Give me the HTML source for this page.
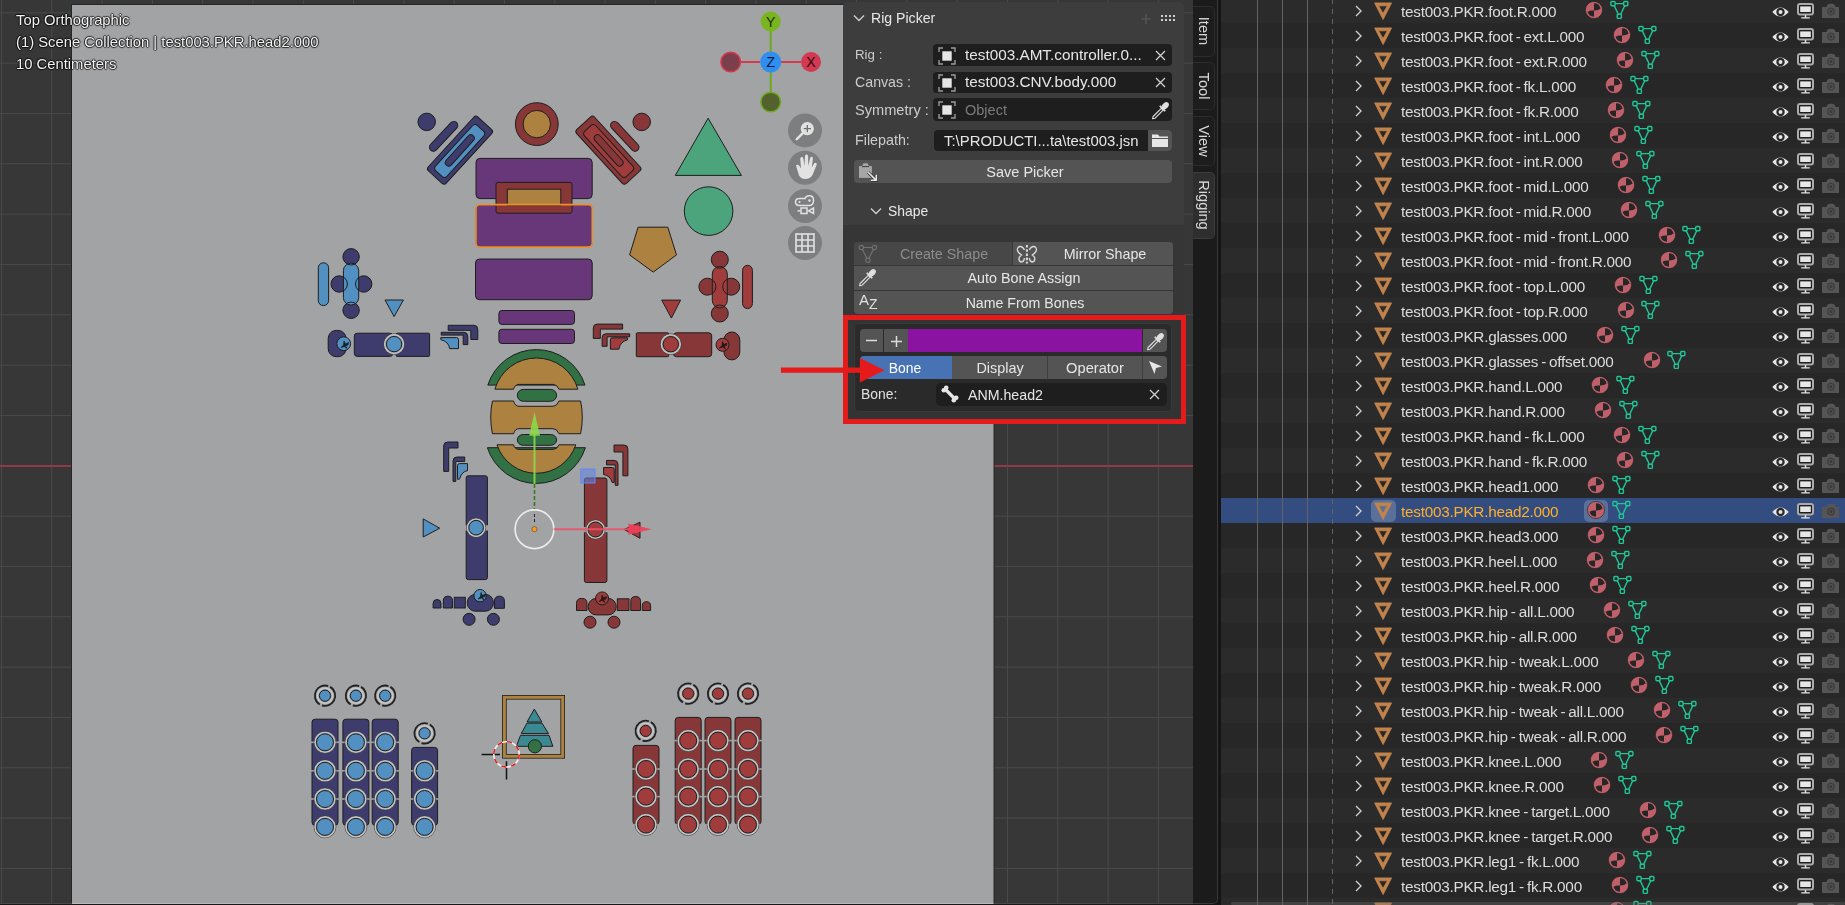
<!DOCTYPE html><html><head><meta charset="utf-8"><style>
*{box-sizing:border-box}
html,body{margin:0;padding:0}
.t,.ovl,.nm{-webkit-font-smoothing:antialiased;will-change:transform}
body{width:1845px;height:905px;overflow:hidden;position:relative;background:#282828;font-family:"Liberation Sans", sans-serif;}
.a{position:absolute}
.ovl{color:#f4f4f4;font-size:14.8px;line-height:20px;text-shadow:1px 0 1px rgba(0,0,0,0.75),-1px 0 1px rgba(0,0,0,0.75),0 1px 1px rgba(0,0,0,0.75),0 -1px 1px rgba(0,0,0,0.75);white-space:nowrap}
.t{position:absolute;white-space:nowrap;line-height:20px;height:20px}
.row{position:absolute;left:1221px;width:624px;height:25px}
.nm{position:absolute;left:180px;top:4px;line-height:20px;color:#dcdcdc;font-size:15.3px;letter-spacing:-0.25px;white-space:nowrap;display:flex;align-items:center}
.h{padding:0 3.0px}
svg{overflow:visible}
</style></head><body>
<svg width="1193" height="905" viewBox="0 0 1193 905" style="position:absolute;left:0;top:0">
<rect width="1193" height="905" fill="#373737"/>
<path d="M1.5 0V905 M51.8 0V905 M102.1 0V905 M152.4 0V905 M202.7 0V905 M253 0V905 M303.3 0V905 M353.6 0V905 M403.9 0V905 M454.2 0V905 M504.5 0V905 M554.8 0V905 M605.1 0V905 M655.4 0V905 M705.7 0V905 M756 0V905 M806.3 0V905 M856.6 0V905 M906.9 0V905 M957.2 0V905 M1007.5 0V905 M1057.8 0V905 M1108.1 0V905 M1158.4 0V905 M0 12.8H1193 M0 63.13H1193 M0 113.46H1193 M0 163.79H1193 M0 214.12H1193 M0 264.45H1193 M0 314.78H1193 M0 365.11H1193 M0 415.44H1193 M0 465.77H1193 M0 516.1H1193 M0 566.43H1193 M0 616.76H1193 M0 667.09H1193 M0 717.42H1193 M0 767.75H1193 M0 818.08H1193 M0 868.41H1193" stroke="#4a4a4a" stroke-width="1" fill="none"/>
<rect x="0" y="465" width="1193" height="2" fill="#8f3a4c"/>
<rect x="71" y="4" width="923.5" height="902" fill="#262626"/>
<rect x="72" y="5" width="921.5" height="900" fill="#a2a3a5"/>
<rect x="0" y="903" width="1193" height="1" fill="#4a4a4a"/><rect x="72" y="903" width="921.5" height="1" fill="#b8b9bb"/><rect x="0" y="904" width="1193" height="1" fill="#181818"/>
<circle cx="426.7" cy="121.9" r="8.75" fill="#3d3c6c" stroke="#1e1e1e" stroke-width="1" /><rect x="424.67" y="132.3" width="37.86" height="8" rx="4" fill="#3d3c6c" stroke="#1e1e1e" stroke-width="1" transform="rotate(-46.9 443.6 136.3)"/><rect x="423.4" y="138.05" width="73.2" height="24.3" rx="3" fill="#3d3c6c" stroke="#1e1e1e" stroke-width="1" transform="rotate(-47.5 460 150.2)"/><rect x="428.95" y="143.4" width="61.5" height="15.2" rx="3.5" fill="#5290c2" stroke="#1e1e1e" stroke-width="1" transform="rotate(-47.5 459.7 151)"/><rect x="439.89" y="146.95" width="39.71" height="7" rx="3.5" fill="#3d3c6c" stroke="#1e1e1e" stroke-width="1" transform="rotate(-47.97 459.75 150.45)"/>
<g transform="translate(1068.4,0) scale(-1,1)"><circle cx="426.7" cy="121.9" r="8.75" fill="#873737" stroke="#1e1e1e" stroke-width="1" /><rect x="424.67" y="132.3" width="37.86" height="8" rx="4" fill="#873737" stroke="#1e1e1e" stroke-width="1" transform="rotate(-46.9 443.6 136.3)"/><rect x="423.4" y="138.05" width="73.2" height="24.3" rx="3" fill="#873737" stroke="#1e1e1e" stroke-width="1" transform="rotate(-47.5 460 150.2)"/><rect x="428.95" y="143.4" width="61.5" height="15.2" rx="3.5" fill="#a03c3c" stroke="#1e1e1e" stroke-width="1" transform="rotate(-47.5 459.7 151)"/><rect x="439.89" y="146.95" width="39.71" height="7" rx="3.5" fill="#873737" stroke="#1e1e1e" stroke-width="1" transform="rotate(-47.97 459.75 150.45)"/></g>
<circle cx="536.8" cy="124.1" r="21.4" fill="#873737" stroke="#1e1e1e" stroke-width="1" />
<circle cx="536.8" cy="124.1" r="13.7" fill="#ad8140" stroke="#1e1e1e" stroke-width="1" />
<rect x="476" y="158.4" width="116.2" height="40.2" rx="4" fill="#67377a" stroke="#1e1e1e" stroke-width="1" />
<rect x="476" y="204.6" width="116.2" height="42.5" rx="4" fill="#67377a" stroke="#1e1e1e" stroke-width="1" />
<rect x="496" y="182.4" width="76" height="30.8" rx="2" fill="#873737" stroke="#1e1e1e" stroke-width="1" />
<rect x="507.3" y="189.2" width="53.5" height="16.3" rx="0" fill="#ad8140" stroke="#1e1e1e" stroke-width="1" />
<rect x="476" y="204.6" width="116.2" height="42.5" rx="4" fill="none" stroke="#f0902a" stroke-width="1.6"/>
<rect x="475.5" y="259" width="116.7" height="40.7" rx="4" fill="#67377a" stroke="#1e1e1e" stroke-width="1" />
<rect x="498.9" y="310.5" width="75.6" height="13.9" rx="3" fill="#67377a" stroke="#1e1e1e" stroke-width="1" />
<rect x="498.9" y="329.3" width="75.6" height="14.2" rx="3" fill="#67377a" stroke="#1e1e1e" stroke-width="1" />
<polygon points="708.1,118.2 675.3,175.4 741.4,175.4" fill="#4ba47b" stroke="#1e1e1e" stroke-width="1" />
<circle cx="708.6" cy="211.1" r="24.3" fill="#4ba47b" stroke="#1e1e1e" stroke-width="1" />
<polygon points="638.1,227.2 667.8,227.2 676.5,254.9 653.2,272.1 629.6,254.9" fill="#ad8140" stroke="#1e1e1e" stroke-width="1" />
<rect x="318.3" y="262.8" width="10.3" height="42.8" rx="5" fill="#5290c2" stroke="#1e1e1e" stroke-width="1" /><circle cx="351.1" cy="256.8" r="8.2" fill="#3d3c6c"/><circle cx="339.2" cy="284" r="8.2" fill="#3d3c6c"/><circle cx="363.7" cy="284" r="8.2" fill="#3d3c6c"/><circle cx="351.1" cy="310.3" r="8.2" fill="#3d3c6c"/><rect x="343.4" y="263.2" width="15.3" height="41.8" rx="7.5" fill="#5290c2" stroke="#1e1e1e" stroke-width="1" /><circle cx="351.1" cy="256.8" r="8.2" fill="none" stroke="#1e1e1e" stroke-width="1"/><circle cx="339.2" cy="284" r="8.2" fill="none" stroke="#1e1e1e" stroke-width="1"/><circle cx="363.7" cy="284" r="8.2" fill="none" stroke="#1e1e1e" stroke-width="1"/><circle cx="351.1" cy="310.3" r="8.2" fill="none" stroke="#1e1e1e" stroke-width="1"/>
<rect x="742.6" y="265.3" width="9.8" height="43.3" rx="5" fill="#a03c3c" stroke="#1e1e1e" stroke-width="1" /><circle cx="719.8" cy="259.7" r="8.5" fill="#873737"/><circle cx="707.4" cy="286.7" r="8.5" fill="#873737"/><circle cx="731.2" cy="286.7" r="8.5" fill="#873737"/><circle cx="719.8" cy="313.5" r="8.5" fill="#873737"/><rect x="712.3" y="266.5" width="15" height="41.4" rx="7.5" fill="#a03c3c" stroke="#1e1e1e" stroke-width="1" /><circle cx="719.8" cy="259.7" r="8.5" fill="none" stroke="#1e1e1e" stroke-width="1"/><circle cx="707.4" cy="286.7" r="8.5" fill="none" stroke="#1e1e1e" stroke-width="1"/><circle cx="731.2" cy="286.7" r="8.5" fill="none" stroke="#1e1e1e" stroke-width="1"/><circle cx="719.8" cy="313.5" r="8.5" fill="none" stroke="#1e1e1e" stroke-width="1"/>
<polygon points="385,300 403.4,300 394.1,316.6" fill="#5290c2" stroke="#1e1e1e" stroke-width="1" />
<polygon points="661.7,300.1 680.6,300.1 671.4,318.1" fill="#a03c3c" stroke="#1e1e1e" stroke-width="1" />
<rect x="328.2" y="330.4" width="17.8" height="26.3" rx="8" fill="#3d3c6c" stroke="#1e1e1e" stroke-width="1" />
<circle cx="343.7" cy="343.7" r="6.9" fill="#5290c2" stroke="#1e1e1e" stroke-width="1" />
<g transform="translate(344.5,344.5)" fill="#151515" stroke="#151515" stroke-width="0.6"><path d="M-0.5 -3.5 L1 -0.5 L4 -2 L3.5 0.5 L1 1 L2.5 4 L0 2 L-3.5 3 L-1 0.5 Z" fill-opacity="0.9"/></g>
<rect x="354.3" y="333.2" width="38.5" height="23.2" rx="3" fill="#3d3c6c" stroke="#1e1e1e" stroke-width="1" />
<rect x="396.2" y="333.2" width="33.4" height="23.2" rx="1" fill="#3d3c6c" stroke="#1e1e1e" stroke-width="1" />
<circle cx="394.1" cy="344.1" r="10.4" fill="#a2a3a5" stroke="#3a3a3a" stroke-width="0.7"/><circle cx="394.1" cy="344.1" r="9.5" fill="none" stroke="#c8c8c8" stroke-width="1.1"/><circle cx="394.1" cy="344.1" r="7.7" fill="#5290c2" stroke="#1e1e1e" stroke-width="1" />
<rect x="636.3" y="332.8" width="32.4" height="23.9" rx="1" fill="#873737" stroke="#1e1e1e" stroke-width="1" />
<rect x="673.5" y="332.8" width="38.2" height="23.9" rx="3" fill="#873737" stroke="#1e1e1e" stroke-width="1" />
<circle cx="670.8" cy="344.2" r="10.4" fill="#a2a3a5" stroke="#3a3a3a" stroke-width="0.7"/><circle cx="670.8" cy="344.2" r="9.5" fill="none" stroke="#c8c8c8" stroke-width="1.1"/><circle cx="670.8" cy="344.2" r="7.7" fill="#a03c3c" stroke="#1e1e1e" stroke-width="1" />
<rect x="723.9" y="332" width="15.9" height="27.9" rx="8" fill="#873737" stroke="#1e1e1e" stroke-width="1" />
<circle cx="722.5" cy="344.8" r="6.5" fill="#a03c3c" stroke="#1e1e1e" stroke-width="1" />
<g transform="translate(723,345)" fill="#151515" stroke="#151515" stroke-width="0.6"><path d="M-0.5 -3.5 L1 -0.5 L4 -2 L3.5 0.5 L1 1 L2.5 4 L0 2 L-3.5 3 L-1 0.5 Z" fill-opacity="0.9"/></g>
<path d="M448.2 325.3 H473.8 Q477.8 325.3 477.8 329.3 V339.5 H470.8 V330.3 H448.2 Z" fill="#3d3c6c" stroke="#1e1e1e" stroke-width="1"/>
<path d="M441.2 332.3 H463.8 Q467.8 332.3 467.8 336.3 V344.6 H463.2 V335.1 H441.2 Z" fill="#3d3c6c" stroke="#1e1e1e" stroke-width="1"/>
<path d="M440.8 337.6 H456.5 Q458.5 337.6 458.5 339.6 V348.6 H449.65 Q448.65 341.6 440.8 339.6 Z" fill="#5290c2" stroke="#1e1e1e" stroke-width="1"/>
<path d="M622.6 324.1 H597.3 Q593.3 324.1 593.3 328.1 V338.4 H600.3 V329.1 H622.6 Z" fill="#873737" stroke="#1e1e1e" stroke-width="1"/>
<path d="M629.7 333.8 H606.1 Q602.1 333.8 602.1 337.8 V346.3 H607.1 V336.8 H629.7 Z" fill="#873737" stroke="#1e1e1e" stroke-width="1"/>
<path d="M627.5 337.8 H612.4 Q610.4 337.8 610.4 339.8 V349.2 H618.95 Q619.95 341.8 627.5 339.8 Z" fill="#a03c3c" stroke="#1e1e1e" stroke-width="1"/>
<path d="M443.7 471.4 V446 Q443.7 442 447.7 442 H458 V448 H448.7 V471.4 Z" fill="#3d3c6c" stroke="#1e1e1e" stroke-width="1"/>
<path d="M453 481.4 V461 Q453 457 457 457 H464.7 V461.5 H455.8 V481.4 Z" fill="#3d3c6c" stroke="#1e1e1e" stroke-width="1"/>
<path d="M457.5 479.2 V465.6 Q457.5 463.6 459.5 463.6 H467.5 V470.6 Q461.5 471.6 459.5 479.2 Z" fill="#5290c2" stroke="#1e1e1e" stroke-width="1"/>
<path d="M627.9 475.8 V449 Q627.9 445 623.9 445 H614 V452 H622.9 V475.8 Z" fill="#873737" stroke="#1e1e1e" stroke-width="1"/>
<path d="M618 485.3 V464.4 Q618 460.4 614 460.4 H606.5 V464.9 H615.2 V485.3 Z" fill="#873737" stroke="#1e1e1e" stroke-width="1"/>
<path d="M614.2 482.5 V469.5 Q614.2 467.5 612.2 467.5 H603.6 V474.5 Q610.2 475.5 612.2 482.5 Z" fill="#a03c3c" stroke="#1e1e1e" stroke-width="1"/>
<rect x="466.2" y="475.8" width="21.2" height="103.8" rx="2" fill="#3d3c6c" stroke="#1e1e1e" stroke-width="1" />
<rect x="465" y="525.3" width="23.6" height="5.2" fill="#a2a3a5"/>
<circle cx="476.1" cy="527.7" r="9.6" fill="#a2a3a5" stroke="#3a3a3a" stroke-width="0.7"/><circle cx="476.1" cy="527.7" r="8.7" fill="none" stroke="#c8c8c8" stroke-width="1.1"/><circle cx="476.1" cy="527.7" r="7.3" fill="#5290c2" stroke="#1e1e1e" stroke-width="1" />
<rect x="584.4" y="478" width="22.5" height="104.5" rx="2" fill="#873737" stroke="#1e1e1e" stroke-width="1" />
<rect x="583.2" y="527" width="25" height="5.2" fill="#a2a3a5"/>
<circle cx="595.5" cy="529.5" r="9.6" fill="#a2a3a5" stroke="#3a3a3a" stroke-width="0.7"/><circle cx="595.5" cy="529.5" r="8.7" fill="none" stroke="#c8c8c8" stroke-width="1.1"/><circle cx="595.5" cy="529.5" r="7.5" fill="#a03c3c" stroke="#1e1e1e" stroke-width="1" />
<polygon points="423.2,518.9 423.2,537 439.7,528.2" fill="#5290c2" stroke="#1e1e1e" stroke-width="1" />
<polygon points="640,522.2 640,538.3 624.2,529.5" fill="#a03c3c" stroke="#1e1e1e" stroke-width="1" />
<path d="M433.1 608 V603.45 Q433.1 599.5 437.05 599.5 H437.05 Q441 599.5 441 603.45 V608 Z" fill="#3d3c6c" stroke="#1e1e1e" stroke-width="1"/>
<path d="M443.3 608 V600.8 Q443.3 596.2 447.9 596.2 H447.9 Q452.5 596.2 452.5 600.8 V608 Z" fill="#3d3c6c" stroke="#1e1e1e" stroke-width="1"/>
<path d="M494.5 608.3 V601.15 Q494.5 596.2 499.45 596.2 H499.45 Q504.4 596.2 504.4 601.15 V608.3 Z" fill="#3d3c6c" stroke="#1e1e1e" stroke-width="1"/>
<rect x="454.3" y="597.3" width="11" height="10.7" rx="0" fill="#3d3c6c" stroke="#1e1e1e" stroke-width="1" />
<rect x="467.3" y="594.4" width="26.1" height="16.8" rx="8" fill="#3d3c6c" stroke="#1e1e1e" stroke-width="1" />
<circle cx="480.1" cy="595.7" r="6.2" fill="#5290c2" stroke="#1e1e1e" stroke-width="1" />
<g transform="translate(481.5,596)" fill="#151515" stroke="#151515" stroke-width="0.6"><path d="M-0.5 -3.5 L1 -0.5 L4 -2 L3.5 0.5 L1 1 L2.5 4 L0 2 L-3.5 3 L-1 0.5 Z" fill-opacity="0.9"/></g>
<circle cx="469.1" cy="619.3" r="6" fill="#3d3c6c" stroke="#1e1e1e" stroke-width="1" />
<circle cx="493.4" cy="619.3" r="6" fill="#3d3c6c" stroke="#1e1e1e" stroke-width="1" />
<path d="M576.5 610.5 V603.4 Q576.5 598.4 581.5 598.4 H582 Q587 598.4 587 603.4 V610.5 Z" fill="#873737" stroke="#1e1e1e" stroke-width="1"/>
<path d="M630.8 610.5 V601.35 Q630.8 596.5 635.65 596.5 H635.65 Q640.5 596.5 640.5 601.35 V610.5 Z" fill="#873737" stroke="#1e1e1e" stroke-width="1"/>
<path d="M642.3 610.5 V605.85 Q642.3 601.7 646.45 601.7 H646.45 Q650.6 601.7 650.6 605.85 V610.5 Z" fill="#873737" stroke="#1e1e1e" stroke-width="1"/>
<rect x="617.3" y="598.8" width="11.7" height="11.7" rx="0" fill="#873737" stroke="#1e1e1e" stroke-width="1" />
<rect x="588.2" y="598.4" width="28" height="16.5" rx="8" fill="#873737" stroke="#1e1e1e" stroke-width="1" />
<circle cx="602.1" cy="598.4" r="6.5" fill="#a03c3c" stroke="#1e1e1e" stroke-width="1" />
<g transform="translate(602.5,598.5)" fill="#151515" stroke="#151515" stroke-width="0.6"><path d="M-0.5 -3.5 L1 -0.5 L4 -2 L3.5 0.5 L1 1 L2.5 4 L0 2 L-3.5 3 L-1 0.5 Z" fill-opacity="0.9"/></g>
<circle cx="590" cy="622.2" r="6" fill="#873737" stroke="#1e1e1e" stroke-width="1" />
<circle cx="614" cy="622.2" r="6" fill="#873737" stroke="#1e1e1e" stroke-width="1" />
<path d="M487.81 385.1 A51 51 0 0 1 584.99 385.1 Z" fill="#317143" stroke="#1e1e1e" stroke-width="1"/>
<path d="M494.9 389.2 A 43.2 43.2 0 0 1 577.9 389.2 H559 Q557 384.4 553 384.4 H519 Q515 384.4 513.5 389.2 Z" fill="#ad8140" stroke="#1e1e1e" stroke-width="1"/>
<rect x="517.3" y="389.4" width="39.3" height="11.9" rx="6" fill="#317143" stroke="#1e1e1e" stroke-width="1" />
<path d="M492.4 401 H513.5 Q515 406.3 519 406.3 H553 Q557 406.3 559 401 H580.6 Q584 417 580.6 433.7 H559 Q557 428.7 553 428.7 H519 Q515 428.7 513.5 433.7 H492.4 Q489 417 492.4 401 Z" fill="#ad8140" stroke="#1e1e1e" stroke-width="1"/>
<rect x="517.3" y="434.5" width="39.3" height="10.8" rx="6" fill="#317143" stroke="#1e1e1e" stroke-width="1" />
<path d="M487.38 447.7 A51.5 51.5 0 0 0 585.42 447.7 Z" fill="#317143" stroke="#1e1e1e" stroke-width="1"/>
<path d="M497 444.8 H513.5 Q515 449.4 519 449.4 H553 Q557 449.4 559 444.8 H575.8 A 41.5 41.5 0 0 1 497 444.8 Z" fill="#ad8140" stroke="#1e1e1e" stroke-width="1"/>
<rect x="312" y="719.2" width="26" height="106.1" rx="3" fill="#3d3c6c" stroke="#1e1e1e" stroke-width="1" /><rect x="311" y="741.5" width="28" height="1.6" fill="#a2a3a5"/><rect x="311" y="770" width="28" height="1.6" fill="#a2a3a5"/><rect x="311" y="798.2" width="28" height="1.6" fill="#a2a3a5"/><rect x="311" y="826.1" width="28" height="1.6" fill="#a2a3a5"/><circle cx="325" cy="742.3" r="10.9" fill="#a2a3a5" stroke="#3a3a3a" stroke-width="0.7"/><circle cx="325" cy="742.3" r="10" fill="none" stroke="#c8c8c8" stroke-width="1.1"/><circle cx="325" cy="742.3" r="8.5" fill="#5290c2" stroke="#1e1e1e" stroke-width="1" /><circle cx="325" cy="770.8" r="10.9" fill="#a2a3a5" stroke="#3a3a3a" stroke-width="0.7"/><circle cx="325" cy="770.8" r="10" fill="none" stroke="#c8c8c8" stroke-width="1.1"/><circle cx="325" cy="770.8" r="8.5" fill="#5290c2" stroke="#1e1e1e" stroke-width="1" /><circle cx="325" cy="799" r="10.9" fill="#a2a3a5" stroke="#3a3a3a" stroke-width="0.7"/><circle cx="325" cy="799" r="10" fill="none" stroke="#c8c8c8" stroke-width="1.1"/><circle cx="325" cy="799" r="8.5" fill="#5290c2" stroke="#1e1e1e" stroke-width="1" /><circle cx="325" cy="826.9" r="10.9" fill="#a2a3a5" stroke="#3a3a3a" stroke-width="0.7"/><circle cx="325" cy="826.9" r="10" fill="none" stroke="#c8c8c8" stroke-width="1.1"/><circle cx="325" cy="826.9" r="8.5" fill="#5290c2" stroke="#1e1e1e" stroke-width="1" />
<circle cx="325" cy="695.7" r="10.2" fill="none" stroke="#222" stroke-width="1.8" stroke-dasharray="29.6 2.4" transform="rotate(-60 325 695.7)"/><circle cx="325" cy="695.7" r="7.6" fill="none" stroke="#c8c8c8" stroke-width="1.6"/><circle cx="325" cy="695.7" r="5.6" fill="#5290c2" stroke="#1e1e1e" stroke-width="1" />
<rect x="342.9" y="719.2" width="26" height="106.1" rx="3" fill="#3d3c6c" stroke="#1e1e1e" stroke-width="1" /><rect x="341.9" y="741.5" width="28" height="1.6" fill="#a2a3a5"/><rect x="341.9" y="770" width="28" height="1.6" fill="#a2a3a5"/><rect x="341.9" y="798.2" width="28" height="1.6" fill="#a2a3a5"/><rect x="341.9" y="826.1" width="28" height="1.6" fill="#a2a3a5"/><circle cx="355.9" cy="742.3" r="10.9" fill="#a2a3a5" stroke="#3a3a3a" stroke-width="0.7"/><circle cx="355.9" cy="742.3" r="10" fill="none" stroke="#c8c8c8" stroke-width="1.1"/><circle cx="355.9" cy="742.3" r="8.5" fill="#5290c2" stroke="#1e1e1e" stroke-width="1" /><circle cx="355.9" cy="770.8" r="10.9" fill="#a2a3a5" stroke="#3a3a3a" stroke-width="0.7"/><circle cx="355.9" cy="770.8" r="10" fill="none" stroke="#c8c8c8" stroke-width="1.1"/><circle cx="355.9" cy="770.8" r="8.5" fill="#5290c2" stroke="#1e1e1e" stroke-width="1" /><circle cx="355.9" cy="799" r="10.9" fill="#a2a3a5" stroke="#3a3a3a" stroke-width="0.7"/><circle cx="355.9" cy="799" r="10" fill="none" stroke="#c8c8c8" stroke-width="1.1"/><circle cx="355.9" cy="799" r="8.5" fill="#5290c2" stroke="#1e1e1e" stroke-width="1" /><circle cx="355.9" cy="826.9" r="10.9" fill="#a2a3a5" stroke="#3a3a3a" stroke-width="0.7"/><circle cx="355.9" cy="826.9" r="10" fill="none" stroke="#c8c8c8" stroke-width="1.1"/><circle cx="355.9" cy="826.9" r="8.5" fill="#5290c2" stroke="#1e1e1e" stroke-width="1" />
<circle cx="355.9" cy="695.7" r="10.2" fill="none" stroke="#222" stroke-width="1.8" stroke-dasharray="29.6 2.4" transform="rotate(-60 355.9 695.7)"/><circle cx="355.9" cy="695.7" r="7.6" fill="none" stroke="#c8c8c8" stroke-width="1.6"/><circle cx="355.9" cy="695.7" r="5.6" fill="#5290c2" stroke="#1e1e1e" stroke-width="1" />
<rect x="372.2" y="719.2" width="26" height="106.1" rx="3" fill="#3d3c6c" stroke="#1e1e1e" stroke-width="1" /><rect x="371.2" y="741.5" width="28" height="1.6" fill="#a2a3a5"/><rect x="371.2" y="770" width="28" height="1.6" fill="#a2a3a5"/><rect x="371.2" y="798.2" width="28" height="1.6" fill="#a2a3a5"/><rect x="371.2" y="826.1" width="28" height="1.6" fill="#a2a3a5"/><circle cx="385.2" cy="742.3" r="10.9" fill="#a2a3a5" stroke="#3a3a3a" stroke-width="0.7"/><circle cx="385.2" cy="742.3" r="10" fill="none" stroke="#c8c8c8" stroke-width="1.1"/><circle cx="385.2" cy="742.3" r="8.5" fill="#5290c2" stroke="#1e1e1e" stroke-width="1" /><circle cx="385.2" cy="770.8" r="10.9" fill="#a2a3a5" stroke="#3a3a3a" stroke-width="0.7"/><circle cx="385.2" cy="770.8" r="10" fill="none" stroke="#c8c8c8" stroke-width="1.1"/><circle cx="385.2" cy="770.8" r="8.5" fill="#5290c2" stroke="#1e1e1e" stroke-width="1" /><circle cx="385.2" cy="799" r="10.9" fill="#a2a3a5" stroke="#3a3a3a" stroke-width="0.7"/><circle cx="385.2" cy="799" r="10" fill="none" stroke="#c8c8c8" stroke-width="1.1"/><circle cx="385.2" cy="799" r="8.5" fill="#5290c2" stroke="#1e1e1e" stroke-width="1" /><circle cx="385.2" cy="826.9" r="10.9" fill="#a2a3a5" stroke="#3a3a3a" stroke-width="0.7"/><circle cx="385.2" cy="826.9" r="10" fill="none" stroke="#c8c8c8" stroke-width="1.1"/><circle cx="385.2" cy="826.9" r="8.5" fill="#5290c2" stroke="#1e1e1e" stroke-width="1" />
<circle cx="385.2" cy="695.7" r="10.2" fill="none" stroke="#222" stroke-width="1.8" stroke-dasharray="29.6 2.4" transform="rotate(-60 385.2 695.7)"/><circle cx="385.2" cy="695.7" r="7.6" fill="none" stroke="#c8c8c8" stroke-width="1.6"/><circle cx="385.2" cy="695.7" r="5.6" fill="#5290c2" stroke="#1e1e1e" stroke-width="1" />
<rect x="411.6" y="747.4" width="26" height="77.9" rx="3" fill="#3d3c6c" stroke="#1e1e1e" stroke-width="1" /><rect x="410.6" y="770" width="28" height="1.6" fill="#a2a3a5"/><rect x="410.6" y="798.2" width="28" height="1.6" fill="#a2a3a5"/><rect x="410.6" y="826.1" width="28" height="1.6" fill="#a2a3a5"/><circle cx="424.6" cy="770.8" r="10.9" fill="#a2a3a5" stroke="#3a3a3a" stroke-width="0.7"/><circle cx="424.6" cy="770.8" r="10" fill="none" stroke="#c8c8c8" stroke-width="1.1"/><circle cx="424.6" cy="770.8" r="8.5" fill="#5290c2" stroke="#1e1e1e" stroke-width="1" /><circle cx="424.6" cy="799" r="10.9" fill="#a2a3a5" stroke="#3a3a3a" stroke-width="0.7"/><circle cx="424.6" cy="799" r="10" fill="none" stroke="#c8c8c8" stroke-width="1.1"/><circle cx="424.6" cy="799" r="8.5" fill="#5290c2" stroke="#1e1e1e" stroke-width="1" /><circle cx="424.6" cy="826.9" r="10.9" fill="#a2a3a5" stroke="#3a3a3a" stroke-width="0.7"/><circle cx="424.6" cy="826.9" r="10" fill="none" stroke="#c8c8c8" stroke-width="1.1"/><circle cx="424.6" cy="826.9" r="8.5" fill="#5290c2" stroke="#1e1e1e" stroke-width="1" />
<circle cx="424.6" cy="733.3" r="10.2" fill="none" stroke="#222" stroke-width="1.8" stroke-dasharray="29.6 2.4" transform="rotate(-60 424.6 733.3)"/><circle cx="424.6" cy="733.3" r="7.6" fill="none" stroke="#c8c8c8" stroke-width="1.6"/><circle cx="424.6" cy="733.3" r="5.6" fill="#5290c2" stroke="#1e1e1e" stroke-width="1" />
<rect x="675.2" y="717.4" width="26" height="107.2" rx="3" fill="#873737" stroke="#1e1e1e" stroke-width="1" /><rect x="674.2" y="739.8" width="28" height="1.6" fill="#a2a3a5"/><rect x="674.2" y="768.2" width="28" height="1.6" fill="#a2a3a5"/><rect x="674.2" y="795.8" width="28" height="1.6" fill="#a2a3a5"/><rect x="674.2" y="823.8" width="28" height="1.6" fill="#a2a3a5"/><circle cx="688.2" cy="740.6" r="10.9" fill="#a2a3a5" stroke="#3a3a3a" stroke-width="0.7"/><circle cx="688.2" cy="740.6" r="10" fill="none" stroke="#c8c8c8" stroke-width="1.1"/><circle cx="688.2" cy="740.6" r="8.5" fill="#a03c3c" stroke="#1e1e1e" stroke-width="1" /><circle cx="688.2" cy="769" r="10.9" fill="#a2a3a5" stroke="#3a3a3a" stroke-width="0.7"/><circle cx="688.2" cy="769" r="10" fill="none" stroke="#c8c8c8" stroke-width="1.1"/><circle cx="688.2" cy="769" r="8.5" fill="#a03c3c" stroke="#1e1e1e" stroke-width="1" /><circle cx="688.2" cy="796.6" r="10.9" fill="#a2a3a5" stroke="#3a3a3a" stroke-width="0.7"/><circle cx="688.2" cy="796.6" r="10" fill="none" stroke="#c8c8c8" stroke-width="1.1"/><circle cx="688.2" cy="796.6" r="8.5" fill="#a03c3c" stroke="#1e1e1e" stroke-width="1" /><circle cx="688.2" cy="824.6" r="10.9" fill="#a2a3a5" stroke="#3a3a3a" stroke-width="0.7"/><circle cx="688.2" cy="824.6" r="10" fill="none" stroke="#c8c8c8" stroke-width="1.1"/><circle cx="688.2" cy="824.6" r="8.5" fill="#a03c3c" stroke="#1e1e1e" stroke-width="1" />
<circle cx="688.2" cy="693.6" r="10.2" fill="none" stroke="#222" stroke-width="1.8" stroke-dasharray="29.6 2.4" transform="rotate(-60 688.2 693.6)"/><circle cx="688.2" cy="693.6" r="7.6" fill="none" stroke="#c8c8c8" stroke-width="1.6"/><circle cx="688.2" cy="693.6" r="5.6" fill="#a03c3c" stroke="#1e1e1e" stroke-width="1" />
<rect x="705" y="717.4" width="26" height="107.2" rx="3" fill="#873737" stroke="#1e1e1e" stroke-width="1" /><rect x="704" y="739.8" width="28" height="1.6" fill="#a2a3a5"/><rect x="704" y="768.2" width="28" height="1.6" fill="#a2a3a5"/><rect x="704" y="795.8" width="28" height="1.6" fill="#a2a3a5"/><rect x="704" y="823.8" width="28" height="1.6" fill="#a2a3a5"/><circle cx="718" cy="740.6" r="10.9" fill="#a2a3a5" stroke="#3a3a3a" stroke-width="0.7"/><circle cx="718" cy="740.6" r="10" fill="none" stroke="#c8c8c8" stroke-width="1.1"/><circle cx="718" cy="740.6" r="8.5" fill="#a03c3c" stroke="#1e1e1e" stroke-width="1" /><circle cx="718" cy="769" r="10.9" fill="#a2a3a5" stroke="#3a3a3a" stroke-width="0.7"/><circle cx="718" cy="769" r="10" fill="none" stroke="#c8c8c8" stroke-width="1.1"/><circle cx="718" cy="769" r="8.5" fill="#a03c3c" stroke="#1e1e1e" stroke-width="1" /><circle cx="718" cy="796.6" r="10.9" fill="#a2a3a5" stroke="#3a3a3a" stroke-width="0.7"/><circle cx="718" cy="796.6" r="10" fill="none" stroke="#c8c8c8" stroke-width="1.1"/><circle cx="718" cy="796.6" r="8.5" fill="#a03c3c" stroke="#1e1e1e" stroke-width="1" /><circle cx="718" cy="824.6" r="10.9" fill="#a2a3a5" stroke="#3a3a3a" stroke-width="0.7"/><circle cx="718" cy="824.6" r="10" fill="none" stroke="#c8c8c8" stroke-width="1.1"/><circle cx="718" cy="824.6" r="8.5" fill="#a03c3c" stroke="#1e1e1e" stroke-width="1" />
<circle cx="718" cy="693.6" r="10.2" fill="none" stroke="#222" stroke-width="1.8" stroke-dasharray="29.6 2.4" transform="rotate(-60 718 693.6)"/><circle cx="718" cy="693.6" r="7.6" fill="none" stroke="#c8c8c8" stroke-width="1.6"/><circle cx="718" cy="693.6" r="5.6" fill="#a03c3c" stroke="#1e1e1e" stroke-width="1" />
<rect x="735" y="717.4" width="26" height="107.2" rx="3" fill="#873737" stroke="#1e1e1e" stroke-width="1" /><rect x="734" y="739.8" width="28" height="1.6" fill="#a2a3a5"/><rect x="734" y="768.2" width="28" height="1.6" fill="#a2a3a5"/><rect x="734" y="795.8" width="28" height="1.6" fill="#a2a3a5"/><rect x="734" y="823.8" width="28" height="1.6" fill="#a2a3a5"/><circle cx="748" cy="740.6" r="10.9" fill="#a2a3a5" stroke="#3a3a3a" stroke-width="0.7"/><circle cx="748" cy="740.6" r="10" fill="none" stroke="#c8c8c8" stroke-width="1.1"/><circle cx="748" cy="740.6" r="8.5" fill="#a03c3c" stroke="#1e1e1e" stroke-width="1" /><circle cx="748" cy="769" r="10.9" fill="#a2a3a5" stroke="#3a3a3a" stroke-width="0.7"/><circle cx="748" cy="769" r="10" fill="none" stroke="#c8c8c8" stroke-width="1.1"/><circle cx="748" cy="769" r="8.5" fill="#a03c3c" stroke="#1e1e1e" stroke-width="1" /><circle cx="748" cy="796.6" r="10.9" fill="#a2a3a5" stroke="#3a3a3a" stroke-width="0.7"/><circle cx="748" cy="796.6" r="10" fill="none" stroke="#c8c8c8" stroke-width="1.1"/><circle cx="748" cy="796.6" r="8.5" fill="#a03c3c" stroke="#1e1e1e" stroke-width="1" /><circle cx="748" cy="824.6" r="10.9" fill="#a2a3a5" stroke="#3a3a3a" stroke-width="0.7"/><circle cx="748" cy="824.6" r="10" fill="none" stroke="#c8c8c8" stroke-width="1.1"/><circle cx="748" cy="824.6" r="8.5" fill="#a03c3c" stroke="#1e1e1e" stroke-width="1" />
<circle cx="748" cy="693.6" r="10.2" fill="none" stroke="#222" stroke-width="1.8" stroke-dasharray="29.6 2.4" transform="rotate(-60 748 693.6)"/><circle cx="748" cy="693.6" r="7.6" fill="none" stroke="#c8c8c8" stroke-width="1.6"/><circle cx="748" cy="693.6" r="5.6" fill="#a03c3c" stroke="#1e1e1e" stroke-width="1" />
<rect x="633" y="745.4" width="26" height="79.2" rx="3" fill="#873737" stroke="#1e1e1e" stroke-width="1" /><rect x="632" y="768.2" width="28" height="1.6" fill="#a2a3a5"/><rect x="632" y="795.8" width="28" height="1.6" fill="#a2a3a5"/><rect x="632" y="823.8" width="28" height="1.6" fill="#a2a3a5"/><circle cx="646" cy="769" r="10.9" fill="#a2a3a5" stroke="#3a3a3a" stroke-width="0.7"/><circle cx="646" cy="769" r="10" fill="none" stroke="#c8c8c8" stroke-width="1.1"/><circle cx="646" cy="769" r="8.5" fill="#a03c3c" stroke="#1e1e1e" stroke-width="1" /><circle cx="646" cy="796.6" r="10.9" fill="#a2a3a5" stroke="#3a3a3a" stroke-width="0.7"/><circle cx="646" cy="796.6" r="10" fill="none" stroke="#c8c8c8" stroke-width="1.1"/><circle cx="646" cy="796.6" r="8.5" fill="#a03c3c" stroke="#1e1e1e" stroke-width="1" /><circle cx="646" cy="824.6" r="10.9" fill="#a2a3a5" stroke="#3a3a3a" stroke-width="0.7"/><circle cx="646" cy="824.6" r="10" fill="none" stroke="#c8c8c8" stroke-width="1.1"/><circle cx="646" cy="824.6" r="8.5" fill="#a03c3c" stroke="#1e1e1e" stroke-width="1" />
<circle cx="645.7" cy="730.9" r="10.2" fill="none" stroke="#222" stroke-width="1.8" stroke-dasharray="29.6 2.4" transform="rotate(-60 645.7 730.9)"/><circle cx="645.7" cy="730.9" r="7.6" fill="none" stroke="#c8c8c8" stroke-width="1.6"/><circle cx="645.7" cy="730.9" r="5.6" fill="#a03c3c" stroke="#1e1e1e" stroke-width="1" />
<rect x="504.4" y="697.3" width="58.3" height="59" fill="none" stroke="#1e1e1e" stroke-width="4.6"/>
<rect x="504.4" y="697.3" width="58.3" height="59" fill="none" stroke="#ad8140" stroke-width="3"/>
<polygon points="534.3,709.1 527,722 541.9,722" fill="#3b8993" stroke="#1e1e1e" stroke-width="1" />
<polygon points="527,723.1 542,723.1 548.5,733.6 521.2,733.6" fill="#3b8993" stroke="#1e1e1e" stroke-width="1" />
<polygon points="520.5,735.3 549,735.3 552.9,746.3 516.4,746.3" fill="#3b8993" stroke="#1e1e1e" stroke-width="1" />
<circle cx="534.9" cy="746.3" r="6.6" fill="#317143" stroke="#1e1e1e" stroke-width="1" />
<path d="M481.6 754.4H500 M506.5 761.2V779.5" stroke="#111" stroke-width="1.5"/>
<circle cx="506.5" cy="754.4" r="12.7" fill="none" stroke="#f0f0f0" stroke-width="1.6"/>
<circle cx="506.5" cy="754.4" r="12.7" fill="none" stroke="#e02020" stroke-width="1.6" stroke-dasharray="5 5"/>
<rect x="580.8" y="469" width="14.2" height="14" fill="#5f86e6" fill-opacity="0.55" stroke="#5f86ff" stroke-width="1"/>
<path d="M534.5 484V430" stroke="#8cd84a" stroke-opacity="0.9" stroke-width="2"/>
<path d="M534.5 484V509" stroke="#3f7a1a" stroke-width="1.6" stroke-dasharray="4 2"/>
<polygon points="534.5,412 529.2,435.8 540,435.8" fill="#8cd84a" fill-opacity="0.9"/>
<path d="M534.5 514V523" stroke="#222" stroke-width="1" stroke-dasharray="3 2"/>
<circle cx="534.5" cy="529.2" r="19.4" fill="none" stroke="#ececec" stroke-width="1.7"/>
<circle cx="534.5" cy="529.2" r="2.6" fill="#ff9a1a" stroke="#333" stroke-width="0.5"/>
<path d="M553.7 529.2H630" stroke="#f0506a" stroke-opacity="0.85" stroke-width="2"/>
<polygon points="651.7,529.2 628.3,523.6 628.3,534.8" fill="#f0405a" fill-opacity="0.9"/>
<path d="M770.7 21.5V102 M730.7 62H811" stroke="none"/>
<path d="M770.7 31V52 M770.7 72V92" stroke="#6ea81e" stroke-width="2"/>
<path d="M740 62H760 M781 62H801" stroke="#d63a50" stroke-width="2"/>
<circle cx="770.7" cy="102" r="9.8" fill="#53612e" stroke="#6ea81e" stroke-width="1.5"/>
<circle cx="730.7" cy="62" r="9.8" fill="#7a3f4a" stroke="#d63a50" stroke-width="1.5"/>
<circle cx="770.7" cy="21.5" r="10" fill="#78b51e"/>
<circle cx="811" cy="62" r="10" fill="#d23a52"/>
<circle cx="770.7" cy="62" r="10.5" fill="#2f8ff0"/>
<text x="770.7" y="26.5" font-family="Liberation Sans" font-size="14" fill="#1b2a08" text-anchor="middle">Y</text>
<text x="770.7" y="67" font-family="Liberation Sans" font-size="14" fill="#0c1a33" text-anchor="middle">Z</text>
<text x="811" y="67" font-family="Liberation Sans" font-size="14" fill="#33080e" text-anchor="middle">X</text>
<circle cx="805" cy="130.4" r="17" fill="#7d7e80"/>
<circle cx="805" cy="167.8" r="17" fill="#7d7e80"/>
<circle cx="805" cy="206" r="17" fill="#7d7e80"/>
<circle cx="805" cy="243" r="17" fill="#7d7e80"/>
<circle cx="807.3" cy="128.6" r="6.6" fill="#e2e2e2"/><path d="M807.3 125V132.2 M803.7 128.6H810.9" stroke="#6e6e6e" stroke-width="1.3"/><path d="M802.8 133.2L796.8 139.2" stroke="#e2e2e2" stroke-width="2.6" stroke-linecap="round"/>
<path d="M796 165.5 Q797.5 163.8 799.5 166 L801 168.5 L800.2 158.5 Q800.6 156.8 802 157 Q803.2 157.3 803.4 158.8 L804.5 166 L805 156 Q805.4 154.5 806.8 154.6 Q808 154.8 808.1 156.3 L808.3 166 L810.2 157.8 Q810.7 156.5 812 156.8 Q813 157.2 812.9 158.6 L811.8 167.5 L814 163.5 Q815 162.3 816.2 162.9 Q817 163.6 816.6 165 L812.5 175 Q810 179.2 805 179 Q801 178.8 799 175.5 Z" fill="#e2e2e2"/>
<g stroke="#e2e2e2" fill="none" stroke-width="1.5"><path d="M799.5 205.5 Q795.5 205.5 795.5 202 Q795.5 198.5 799.5 198.5 H805 Q806 195.8 809.5 195.8 Q813.5 195.8 813.5 200.5 Q813.5 205.5 809 205.5 Z"/><rect x="801" y="208" width="6" height="5.5"/><path d="M808.5 210.8 L813.5 208 V213.5 Z"/><path d="M797.5 210.8H800.5"/></g><circle cx="799.5" cy="202" r="1.1" fill="#e2e2e2"/><circle cx="809.5" cy="200.5" r="1.3" fill="#e2e2e2"/>
<g stroke="#e2e2e2" fill="none" stroke-width="1.6"><rect x="796" y="234" width="18" height="18"/><path d="M802 234V252 M808 234V252 M796 240H814 M796 246H814"/></g>
</svg>
<div class="a ovl" style="left:16px;top:9.5px">Top Orthographic</div>
<div class="a ovl" style="left:16px;top:31.5px">(1) Scene Collection | test003.PKR.head2.000</div>
<div class="a ovl" style="left:16px;top:53.5px">10 Centimeters</div>
<div class="a" style="left:843px;top:2px;width:341px;height:223px;background:#3d3d3d;border-radius:5px 5px 0 0;"></div>
<div class="a" style="left:843px;top:225px;width:341px;height:91px;background:#363636;border-radius:0;"></div>
<svg class="a" style="left:853px;top:14px" width="12" height="8" viewBox="0 0 12 8"><path d="M1 1.5L6 6.5L11 1.5" stroke="#d0d0d0" stroke-width="1.3" fill="none"/></svg>
<div class="t" style="left:870.5px;top:8px;font-size:14.1px;color:#e8e8e8;">Rig Picker</div>
<svg class="a" style="left:1140px;top:13px" width="12" height="12" viewBox="0 0 12 12"><path d="M6 1V11M1 6H11" stroke="#5a5a5a" stroke-width="1.2"/></svg>
<svg class="a" style="left:1161px;top:14.5px" width="16" height="8" viewBox="0 0 16 8"><rect x="0" y="0" width="2" height="2" fill="#cfcfcf"/><rect x="0" y="4" width="2" height="2" fill="#cfcfcf"/><rect x="4" y="0" width="2" height="2" fill="#cfcfcf"/><rect x="4" y="4" width="2" height="2" fill="#cfcfcf"/><rect x="8" y="0" width="2" height="2" fill="#cfcfcf"/><rect x="8" y="4" width="2" height="2" fill="#cfcfcf"/><rect x="12" y="0" width="2" height="2" fill="#cfcfcf"/><rect x="12" y="4" width="2" height="2" fill="#cfcfcf"/></svg>
<div class="t" style="left:854.5px;top:45.3px;font-size:13.3px;color:#cccccc;">Rig :</div>
<div class="a" style="left:933px;top:44.1px;width:239.4000000000001px;height:22.4px;background:#1e1e1e;border-radius:4px;"></div>
<svg class="a" style="left:938px;top:47.099999999999994px" width="18" height="18" viewBox="0 0 18 18"><g fill="none" stroke="#9a9a9a" stroke-width="1.4"><path d="M1 5V1H5M13 1H17V5M17 13V17H13M5 17H1V13"/></g><rect x="4.3" y="4.3" width="9.4" height="9.4" fill="#e6e6e6"/></svg>
<div class="t" style="left:965px;top:45.3px;font-size:15.3px;color:#e6e6e6;">test003.AMT.controller.0...</div>
<svg class="a" style="left:1155px;top:49.8px" width="11" height="11" viewBox="0 0 11 11"><path d="M1 1L10 10M10 1L1 10" stroke="#d0d0d0" stroke-width="1.3"/></svg>
<div class="t" style="left:854.5px;top:72.45px;font-size:14.2px;color:#cccccc;">Canvas :</div>
<div class="a" style="left:933px;top:71.5px;width:239.4000000000001px;height:21.900000000000006px;background:#1e1e1e;border-radius:4px;"></div>
<svg class="a" style="left:938px;top:74.25px" width="18" height="18" viewBox="0 0 18 18"><g fill="none" stroke="#9a9a9a" stroke-width="1.4"><path d="M1 5V1H5M13 1H17V5M17 13V17H13M5 17H1V13"/></g><rect x="4.3" y="4.3" width="9.4" height="9.4" fill="#e6e6e6"/></svg>
<div class="t" style="left:965px;top:72.45px;font-size:15.3px;color:#e6e6e6;">test003.CNV.body.000</div>
<svg class="a" style="left:1155px;top:76.95px" width="11" height="11" viewBox="0 0 11 11"><path d="M1 1L10 10M10 1L1 10" stroke="#d0d0d0" stroke-width="1.3"/></svg>
<div class="t" style="left:854.5px;top:99.5px;font-size:14.6px;color:#cccccc;">Symmetry :</div>
<div class="a" style="left:933px;top:98.3px;width:239.4000000000001px;height:22.400000000000006px;background:#1e1e1e;border-radius:4px;"></div>
<svg class="a" style="left:938px;top:101.3px" width="18" height="18" viewBox="0 0 18 18"><g fill="none" stroke="#9a9a9a" stroke-width="1.4"><path d="M1 5V1H5M13 1H17V5M17 13V17H13M5 17H1V13"/></g><rect x="4.3" y="4.3" width="9.4" height="9.4" fill="#e6e6e6"/></svg>
<div class="t" style="left:965px;top:99.5px;font-size:14.5px;color:#7a7a7a;">Object</div>
<svg class="a" style="left:1151px;top:100.5px" width="18" height="18" viewBox="0 0 18 18"><ellipse cx="14.3" cy="4.7" rx="4" ry="2.9" transform="rotate(-45 14.3 4.7)" fill="#e0e0e0"/><path d="M9.3 5.3L13.7 9.7" stroke="#e0e0e0" stroke-width="1.8" stroke-linecap="round"/><path d="M12.1 9.1L3.9 17.3L1.6 17.8L2.1 15.5L10.3 7.3Z" fill="none" stroke="#e0e0e0" stroke-width="1.1" stroke-linejoin="round"/></svg>
<div class="t" style="left:854.5px;top:130px;font-size:14.3px;color:#cccccc;">Filepath:</div>
<div class="a" style="left:934px;top:129.5px;width:238.4000000000001px;height:21.900000000000006px;background:#1e1e1e;border-radius:4px;"></div>
<div class="a" style="left:1148.4px;top:129.5px;width:24.0px;height:21.900000000000006px;background:#545454;border-radius:0 4px 4px 0;"></div>
<svg class="a" style="left:1151px;top:133px" width="18" height="15" viewBox="0 0 18 15"><path d="M1 1.5H7L8.5 3.5H17V5H1Z M1 6H17V14H1Z" fill="#e6e6e6"/></svg>
<div class="t" style="left:943.8px;top:130.5px;font-size:14.9px;color:#e6e6e6;">T:\PRODUCTI...ta\test003.jsn</div>
<div class="a" style="left:854.1px;top:160.1px;width:318.30000000000007px;height:22.700000000000017px;background:#545454;border-radius:4px;"></div>
<svg class="a" style="left:859px;top:163px" width="19" height="19" viewBox="0 0 19 19"><rect x="0" y="3" width="12.9" height="11.9" fill="#a6a6a6"/><path d="M3 3 L4.5 0.3 H8.5 L10 3Z" fill="#a6a6a6"/><path d="M3 3.6H10" stroke="#3a3a3a" stroke-width="1"/><path d="M9.2 9.3L17 17.1M17.3 11.8V17.3H11.8" stroke="#3a3a3a" stroke-width="3.2" fill="none"/><path d="M9.2 9.3L17 17.1M17.3 11.8V17.3H11.8" stroke="#e6e6e6" stroke-width="1.6" fill="none"/></svg>
<div class="t" style="left:874.8px;width:300px;text-align:center;top:161.5px;font-size:14.5px;color:#e6e6e6;">Save Picker</div>
<svg class="a" style="left:870px;top:206.5px" width="12" height="8" viewBox="0 0 12 8"><path d="M1 1.5L6 6.5L11 1.5" stroke="#d0d0d0" stroke-width="1.3" fill="none"/></svg>
<div class="t" style="left:887.5px;top:200.5px;font-size:13.9px;color:#e8e8e8;">Shape</div>
<div class="a" style="left:854.3px;top:242.2px;width:318.70000000000005px;height:22.80000000000001px;background:#474747;border-radius:4px 4px 0 0;"></div>
<div class="a" style="left:1012.9px;top:242.2px;width:160.10000000000002px;height:22.80000000000001px;background:#545454;border-radius:0 4px 0 0;"></div>
<div class="a" style="left:1012px;top:242.2px;width:0.8999999999999773px;height:22.80000000000001px;background:#3a3a3a;border-radius:0;"></div>
<div class="a" style="left:854.3px;top:265.7px;width:318.70000000000005px;height:24.400000000000034px;background:#545454;border-radius:0;"></div>
<div class="a" style="left:854.3px;top:291.1px;width:318.70000000000005px;height:23.19999999999999px;background:#545454;border-radius:0 0 4px 4px;"></div>
<svg class="a" style="left:859px;top:244px" width="19" height="19" viewBox="0 0 19 19"><g stroke="#707070" stroke-width="1.2" fill="none"><path d="M4.6 3.5H13.2M3.4 5.5L7.9 14.2M14.4 5.5L9.9 14.2"/><circle cx="2.4" cy="3.5" r="2.2"/><circle cx="15.4" cy="3.5" r="2.2"/><circle cx="8.9" cy="16.3" r="2.2"/></g></svg>
<div class="t" style="left:794.4px;width:300px;text-align:center;top:243.6px;font-size:14.3px;color:#8c8c8c;">Create Shape</div>
<svg class="a" style="left:1015px;top:244px" width="24" height="20" viewBox="0 0 24 20"><g stroke="#dcdcdc" stroke-width="1.3" fill="none"><path d="M9.5 5.9 Q7.5 2.5 5.5 2.5 Q2.2 2.5 2.4 6 Q2.6 8.5 6.5 11 Q3.5 13 4 15.5 Q4.5 18 6.8 18 Q8.8 18 9.5 14.2"/><path d="M 14.3 5.9 Q 16.3 2.5 18.3 2.5 Q 21.6 2.5 21.4 6.0 Q 21.2 8.5 17.3 11.0 Q 20.3 13.0 19.8 15.5 Q 19.3 18.0 17.0 18.0 Q 15.0 18.0 14.3 14.2"/><path d="M11.9 1V19.5" stroke-width="2" stroke-dasharray="2.6 1.6"/></g></svg>
<div class="t" style="left:954.5px;width:300px;text-align:center;top:243.6px;font-size:14.3px;color:#e6e6e6;">Mirror Shape</div>
<svg class="a" style="left:858px;top:268px" width="19" height="19" viewBox="0 0 19 19"><ellipse cx="14.3" cy="4.7" rx="4" ry="2.9" transform="rotate(-45 14.3 4.7)" fill="#e0e0e0"/><path d="M9.3 5.3L13.7 9.7" stroke="#e0e0e0" stroke-width="1.8" stroke-linecap="round"/><path d="M12.1 9.1L3.9 17.3L1.6 17.8L2.1 15.5L10.3 7.3Z" fill="none" stroke="#e0e0e0" stroke-width="1.1" stroke-linejoin="round"/></svg>
<div class="t" style="left:874.3px;width:300px;text-align:center;top:268px;font-size:14.3px;color:#e6e6e6;">Auto Bone Assign</div>
<div class="t" style="left:859px;top:290px;font-size:15px;color:#e0e0e0;"><span style="font-size:15px">A</span></div>
<div class="t" style="left:869px;top:294px;font-size:14px;color:#e0e0e0;"><span>Z</span></div>
<div class="t" style="left:874.7px;width:300px;text-align:center;top:292.7px;font-size:14.15px;color:#e6e6e6;">Name From Bones</div>
<div class="a" style="left:843px;top:316px;width:341px;height:104px;background:#333333;border-radius:0;"></div>
<div class="a" style="left:853.9px;top:323.3px;width:318.5000000000001px;height:88.80000000000001px;background:#2a2a2a;border-radius:5px;border:1px solid #383838"></div>
<div class="a" style="left:859.9px;top:328.8px;width:23.200000000000045px;height:23.399999999999977px;background:#545454;border-radius:4px 0 0 4px;"></div>
<div class="a" style="left:884.1px;top:328.8px;width:24.199999999999932px;height:23.399999999999977px;background:#545454;border-radius:0;"></div>
<div class="a" style="left:908.3px;top:328.8px;width:233.9000000000001px;height:23.399999999999977px;background:#8a14a1;border-radius:0;"></div>
<div class="a" style="left:1142.6px;top:328.8px;width:24.5px;height:23.399999999999977px;background:#545454;border-radius:0 4px 4px 0;"></div>
<svg class="a" style="left:865px;top:335px" width="13" height="11" viewBox="0 0 13 11"><path d="M1 5.5H12" stroke="#dcdcdc" stroke-width="1.5"/></svg>
<svg class="a" style="left:890px;top:334.5px" width="13" height="13" viewBox="0 0 13 13"><path d="M1 6.5H12M6.5 1V12" stroke="#dcdcdc" stroke-width="1.5"/></svg>
<svg class="a" style="left:1146px;top:331.5px" width="19" height="19" viewBox="0 0 19 19"><ellipse cx="14.3" cy="4.7" rx="4" ry="2.9" transform="rotate(-45 14.3 4.7)" fill="#e0e0e0"/><path d="M9.3 5.3L13.7 9.7" stroke="#e0e0e0" stroke-width="1.8" stroke-linecap="round"/><path d="M12.1 9.1L3.9 17.3L1.6 17.8L2.1 15.5L10.3 7.3Z" fill="none" stroke="#e0e0e0" stroke-width="1.1" stroke-linejoin="round"/></svg>
<div class="a" style="left:859.9px;top:356.1px;width:92.10000000000002px;height:22.799999999999955px;background:#4772b3;border-radius:4px 0 0 4px;"></div>
<div class="a" style="left:952px;top:356.1px;width:95.79999999999995px;height:22.799999999999955px;background:#545454;border-radius:0;"></div>
<div class="a" style="left:1047.8px;top:356.1px;width:94.79999999999995px;height:22.799999999999955px;background:#545454;border-radius:0;"></div>
<div class="a" style="left:1142.6px;top:356.1px;width:24.5px;height:22.799999999999955px;background:#545454;border-radius:0 4px 4px 0;"></div>
<div class="a" style="left:1047px;top:356.1px;width:0.7999999999999545px;height:22.799999999999955px;background:#3f3f3f;border-radius:0;"></div>
<div class="a" style="left:1142px;top:356.1px;width:0.599999999999909px;height:22.799999999999955px;background:#3f3f3f;border-radius:0;"></div>
<div class="t" style="left:755.4px;width:300px;text-align:center;top:357.5px;font-size:13.9px;color:#ffffff;">Bone</div>
<div class="t" style="left:849.9px;width:300px;text-align:center;top:357.5px;font-size:14.4px;color:#e6e6e6;">Display</div>
<div class="t" style="left:944.9000000000001px;width:300px;text-align:center;top:357.5px;font-size:14.65px;color:#e6e6e6;">Operator</div>
<svg class="a" style="left:1147px;top:359px" width="16" height="16" viewBox="0 0 16 16"><path d="M2 2L15 7.5L9 9L7.5 15Z" fill="#e6e6e6"/></svg>
<div class="t" style="left:860.5px;top:383.8px;font-size:13.9px;color:#e0e0e0;">Bone:</div>
<div class="a" style="left:935.7px;top:382.6px;width:231.39999999999986px;height:23.899999999999977px;background:#1e1e1e;border-radius:5px;"></div>
<svg class="a" style="left:941px;top:385px" width="18" height="18" viewBox="0 0 18 18"><g fill="#e6e6e6"><circle cx="2.8" cy="5.2" r="2.3"/><circle cx="5.2" cy="2.8" r="2.3"/><circle cx="12.8" cy="15.2" r="2.3"/><circle cx="15.2" cy="12.8" r="2.3"/></g><path d="M4.5 4.5L13.5 13.5" stroke="#e6e6e6" stroke-width="3.2"/></svg>
<div class="t" style="left:968.3px;top:384.5px;font-size:14.2px;color:#e6e6e6;">ANM.head2</div>
<svg class="a" style="left:1149px;top:389px" width="11" height="11" viewBox="0 0 11 11"><path d="M1 1L10 10M10 1L1 10" stroke="#d0d0d0" stroke-width="1.3"/></svg>
<div class="a" style="left:842.7px;top:315px;width:343.7px;height:108.7px;border:5.3px solid #e51b1b"></div>
<svg class="a" style="left:780px;top:355px" width="110" height="30" viewBox="0 0 110 30"><rect x="0.9" y="12.5" width="81" height="5.3" fill="#e51b1b"/><polygon points="79.9,3 104.5,15.3 79.9,27.6" fill="#e51b1b"/></svg>
<div class="a" style="left:1193px;top:0px;width:28px;height:905px;background:#151515;border-radius:0;"></div>
<div class="a" style="left:1193px;top:-5px;width:25px;height:909px;background:#1b1b1b;border-radius:0 0 5px 0;border-right:1px solid #3a3a3a;border-bottom:1px solid #3a3a3a"></div>
<div class="a" style="left:1193px;top:6px;width:21.59999999999991px;height:50.5px;background:#1d1d1d;border-radius:0 5px 5px 0;border:1px solid #2c2c2c;border-left:none"></div>
<div class="t" style="left:1164px;top:21.25px;width:80px;text-align:center;font-size:14.6px;color:#d8d8d8;transform:rotate(90deg)">Item</div>
<div class="a" style="left:1193px;top:62px;width:21.59999999999991px;height:48.400000000000006px;background:#1d1d1d;border-radius:0 5px 5px 0;border:1px solid #2c2c2c;border-left:none"></div>
<div class="t" style="left:1164px;top:76.2px;width:80px;text-align:center;font-size:14.6px;color:#d8d8d8;transform:rotate(90deg)">Tool</div>
<div class="a" style="left:1193px;top:115.8px;width:21.59999999999991px;height:50.60000000000001px;background:#1d1d1d;border-radius:0 5px 5px 0;border:1px solid #2c2c2c;border-left:none"></div>
<div class="t" style="left:1164px;top:131.1px;width:80px;text-align:center;font-size:14.6px;color:#d8d8d8;transform:rotate(90deg)">View</div>
<div class="a" style="left:1193px;top:172.2px;width:21.59999999999991px;height:66.4px;background:#2e2e2e;border-radius:0 5px 5px 0;border:1px solid #3c3c3c;border-left:none"></div>
<div class="t" style="left:1164px;top:195.39999999999998px;width:80px;text-align:center;font-size:14.6px;color:#d8d8d8;transform:rotate(90deg)">Rigging</div>
<div class="a" style="left:1221px;top:0px;width:624px;height:905px;background:#282828;border-radius:0;"></div>
<div class="row" style="top:-2px;background:#2b2b2b">
<svg class="a" style="left:133px;top:6px" width="9" height="14" viewBox="0 0 9 14"><path d="M2 1.9L7 6.9L2 11.9" stroke="#d0d0d0" stroke-width="1.4" fill="none"/></svg>
<svg class="a" style="left:150px;top:0px" width="24" height="24" viewBox="0 0 24 24"><path d="M3.6 4.9H20.6L12.1 21.6Z M7.6 7.8L12 15.4L16.4 7.8Z" fill="#c2834d" fill-rule="evenodd" stroke="#c2834d" stroke-width="0.8" stroke-linejoin="round"/></svg>
<div class="nm" style="color:#dcdcdc">test003.PKR.foot.R.000</div>
<svg class="a" style="left:364.238453125px;top:2.9px" width="18" height="18" viewBox="0 0 18 18"><circle cx="9" cy="9" r="8.6" fill="#c0606a"/><path d="M9 2.2 V9.6 Q13 9.8 15.6 7.5 A6.9 6.9 0 0 0 9 2.2Z" fill="#262626"/><path d="M9 15.8 V9.6 Q5 9.2 2.6 10.8 A6.9 6.9 0 0 0 9 15.8Z" fill="#262626"/><circle cx="9" cy="9" r="8.6" fill="none" stroke="#1e1e1e" stroke-width="0.6"/></svg>
<svg class="a" style="left:389.038453125px;top:2px" width="19" height="19" viewBox="0 0 19 19"><g fill="none" stroke="#1fc797" stroke-width="1.4"><path d="M5.2 3.6H13.6M4.2 5.6L8.3 14.2M14.8 5.6L10.7 14.2"/><rect x="0.9" y="1.5" width="4.2" height="4.2" rx="0.9"/><rect x="13.7" y="1.5" width="4.2" height="4.2" rx="0.9"/><rect x="7.2" y="14.2" width="4.2" height="4.2" rx="0.9"/></g></svg>
<svg class="a" style="left:551px;top:7.5px" width="17" height="12" viewBox="0 0 17 12"><path d="M0.3 6 Q8.5 -3.2 16.7 6 Q8.5 15.2 0.3 6Z" fill="#e6e6e6"/><circle cx="8.5" cy="6" r="4.2" fill="#282828"/><circle cx="8.5" cy="6" r="2" fill="#e6e6e6"/></svg>
<svg class="a" style="left:576px;top:5px" width="17" height="15" viewBox="0 0 17 15"><rect x="1" y="1" width="15" height="10.4" rx="2" fill="#1e1e1e" stroke="#ababab" stroke-width="2"/><rect x="3.2" y="3.4" width="10.6" height="5.6" fill="#e6e6e6"/><path d="M8.5 12V14.6M4.2 14.9H12.8" stroke="#e6e6e6" stroke-width="1.4"/></svg>
<svg class="a" style="left:601px;top:5px" width="17" height="16" viewBox="0 0 17 16"><path d="M0 4H4.5Q5 0.8 8 0.8H10Q13 0.8 13.5 4H17V15H0Z" fill="#555555"/><circle cx="9" cy="8.6" r="3.8" fill="#3c3c3c" stroke="#444" stroke-width="0.5"/><circle cx="9" cy="8.6" r="2.6" fill="#555555"/><circle cx="9" cy="8.6" r="1.6" fill="#3a3a3a"/></svg>
</div>
<div class="row" style="top:23px;background:#272727">
<svg class="a" style="left:133px;top:6px" width="9" height="14" viewBox="0 0 9 14"><path d="M2 1.9L7 6.9L2 11.9" stroke="#d0d0d0" stroke-width="1.4" fill="none"/></svg>
<svg class="a" style="left:150px;top:0px" width="24" height="24" viewBox="0 0 24 24"><path d="M3.6 4.9H20.6L12.1 21.6Z M7.6 7.8L12 15.4L16.4 7.8Z" fill="#c2834d" fill-rule="evenodd" stroke="#c2834d" stroke-width="0.8" stroke-linejoin="round"/></svg>
<div class="nm" style="color:#dcdcdc">test003.PKR.foot<span class="h">-</span>ext.L.000</div>
<svg class="a" style="left:392.20040625px;top:2.9px" width="18" height="18" viewBox="0 0 18 18"><circle cx="9" cy="9" r="8.6" fill="#c0606a"/><path d="M9 2.2 V9.6 Q13 9.8 15.6 7.5 A6.9 6.9 0 0 0 9 2.2Z" fill="#262626"/><path d="M9 15.8 V9.6 Q5 9.2 2.6 10.8 A6.9 6.9 0 0 0 9 15.8Z" fill="#262626"/><circle cx="9" cy="9" r="8.6" fill="none" stroke="#1e1e1e" stroke-width="0.6"/></svg>
<svg class="a" style="left:417.00040625px;top:2px" width="19" height="19" viewBox="0 0 19 19"><g fill="none" stroke="#1fc797" stroke-width="1.4"><path d="M5.2 3.6H13.6M4.2 5.6L8.3 14.2M14.8 5.6L10.7 14.2"/><rect x="0.9" y="1.5" width="4.2" height="4.2" rx="0.9"/><rect x="13.7" y="1.5" width="4.2" height="4.2" rx="0.9"/><rect x="7.2" y="14.2" width="4.2" height="4.2" rx="0.9"/></g></svg>
<svg class="a" style="left:551px;top:7.5px" width="17" height="12" viewBox="0 0 17 12"><path d="M0.3 6 Q8.5 -3.2 16.7 6 Q8.5 15.2 0.3 6Z" fill="#e6e6e6"/><circle cx="8.5" cy="6" r="4.2" fill="#282828"/><circle cx="8.5" cy="6" r="2" fill="#e6e6e6"/></svg>
<svg class="a" style="left:576px;top:5px" width="17" height="15" viewBox="0 0 17 15"><rect x="1" y="1" width="15" height="10.4" rx="2" fill="#1e1e1e" stroke="#ababab" stroke-width="2"/><rect x="3.2" y="3.4" width="10.6" height="5.6" fill="#e6e6e6"/><path d="M8.5 12V14.6M4.2 14.9H12.8" stroke="#e6e6e6" stroke-width="1.4"/></svg>
<svg class="a" style="left:601px;top:5px" width="17" height="16" viewBox="0 0 17 16"><path d="M0 4H4.5Q5 0.8 8 0.8H10Q13 0.8 13.5 4H17V15H0Z" fill="#555555"/><circle cx="9" cy="8.6" r="3.8" fill="#3c3c3c" stroke="#444" stroke-width="0.5"/><circle cx="9" cy="8.6" r="2.6" fill="#555555"/><circle cx="9" cy="8.6" r="1.6" fill="#3a3a3a"/></svg>
</div>
<div class="row" style="top:48px;background:#2b2b2b">
<svg class="a" style="left:133px;top:6px" width="9" height="14" viewBox="0 0 9 14"><path d="M2 1.9L7 6.9L2 11.9" stroke="#d0d0d0" stroke-width="1.4" fill="none"/></svg>
<svg class="a" style="left:150px;top:0px" width="24" height="24" viewBox="0 0 24 24"><path d="M3.6 4.9H20.6L12.1 21.6Z M7.6 7.8L12 15.4L16.4 7.8Z" fill="#c2834d" fill-rule="evenodd" stroke="#c2834d" stroke-width="0.8" stroke-linejoin="round"/></svg>
<div class="nm" style="color:#dcdcdc">test003.PKR.foot<span class="h">-</span>ext.R.000</div>
<svg class="a" style="left:394.74164062499995px;top:2.9px" width="18" height="18" viewBox="0 0 18 18"><circle cx="9" cy="9" r="8.6" fill="#c0606a"/><path d="M9 2.2 V9.6 Q13 9.8 15.6 7.5 A6.9 6.9 0 0 0 9 2.2Z" fill="#262626"/><path d="M9 15.8 V9.6 Q5 9.2 2.6 10.8 A6.9 6.9 0 0 0 9 15.8Z" fill="#262626"/><circle cx="9" cy="9" r="8.6" fill="none" stroke="#1e1e1e" stroke-width="0.6"/></svg>
<svg class="a" style="left:419.54164062499996px;top:2px" width="19" height="19" viewBox="0 0 19 19"><g fill="none" stroke="#1fc797" stroke-width="1.4"><path d="M5.2 3.6H13.6M4.2 5.6L8.3 14.2M14.8 5.6L10.7 14.2"/><rect x="0.9" y="1.5" width="4.2" height="4.2" rx="0.9"/><rect x="13.7" y="1.5" width="4.2" height="4.2" rx="0.9"/><rect x="7.2" y="14.2" width="4.2" height="4.2" rx="0.9"/></g></svg>
<svg class="a" style="left:551px;top:7.5px" width="17" height="12" viewBox="0 0 17 12"><path d="M0.3 6 Q8.5 -3.2 16.7 6 Q8.5 15.2 0.3 6Z" fill="#e6e6e6"/><circle cx="8.5" cy="6" r="4.2" fill="#282828"/><circle cx="8.5" cy="6" r="2" fill="#e6e6e6"/></svg>
<svg class="a" style="left:576px;top:5px" width="17" height="15" viewBox="0 0 17 15"><rect x="1" y="1" width="15" height="10.4" rx="2" fill="#1e1e1e" stroke="#ababab" stroke-width="2"/><rect x="3.2" y="3.4" width="10.6" height="5.6" fill="#e6e6e6"/><path d="M8.5 12V14.6M4.2 14.9H12.8" stroke="#e6e6e6" stroke-width="1.4"/></svg>
<svg class="a" style="left:601px;top:5px" width="17" height="16" viewBox="0 0 17 16"><path d="M0 4H4.5Q5 0.8 8 0.8H10Q13 0.8 13.5 4H17V15H0Z" fill="#555555"/><circle cx="9" cy="8.6" r="3.8" fill="#3c3c3c" stroke="#444" stroke-width="0.5"/><circle cx="9" cy="8.6" r="2.6" fill="#555555"/><circle cx="9" cy="8.6" r="1.6" fill="#3a3a3a"/></svg>
</div>
<div class="row" style="top:73px;background:#272727">
<svg class="a" style="left:133px;top:6px" width="9" height="14" viewBox="0 0 9 14"><path d="M2 1.9L7 6.9L2 11.9" stroke="#d0d0d0" stroke-width="1.4" fill="none"/></svg>
<svg class="a" style="left:150px;top:0px" width="24" height="24" viewBox="0 0 24 24"><path d="M3.6 4.9H20.6L12.1 21.6Z M7.6 7.8L12 15.4L16.4 7.8Z" fill="#c2834d" fill-rule="evenodd" stroke="#c2834d" stroke-width="0.8" stroke-linejoin="round"/></svg>
<div class="nm" style="color:#dcdcdc">test003.PKR.foot<span class="h">-</span>fk.L.000</div>
<svg class="a" style="left:383.942171875px;top:2.9px" width="18" height="18" viewBox="0 0 18 18"><circle cx="9" cy="9" r="8.6" fill="#c0606a"/><path d="M9 2.2 V9.6 Q13 9.8 15.6 7.5 A6.9 6.9 0 0 0 9 2.2Z" fill="#262626"/><path d="M9 15.8 V9.6 Q5 9.2 2.6 10.8 A6.9 6.9 0 0 0 9 15.8Z" fill="#262626"/><circle cx="9" cy="9" r="8.6" fill="none" stroke="#1e1e1e" stroke-width="0.6"/></svg>
<svg class="a" style="left:408.742171875px;top:2px" width="19" height="19" viewBox="0 0 19 19"><g fill="none" stroke="#1fc797" stroke-width="1.4"><path d="M5.2 3.6H13.6M4.2 5.6L8.3 14.2M14.8 5.6L10.7 14.2"/><rect x="0.9" y="1.5" width="4.2" height="4.2" rx="0.9"/><rect x="13.7" y="1.5" width="4.2" height="4.2" rx="0.9"/><rect x="7.2" y="14.2" width="4.2" height="4.2" rx="0.9"/></g></svg>
<svg class="a" style="left:551px;top:7.5px" width="17" height="12" viewBox="0 0 17 12"><path d="M0.3 6 Q8.5 -3.2 16.7 6 Q8.5 15.2 0.3 6Z" fill="#e6e6e6"/><circle cx="8.5" cy="6" r="4.2" fill="#282828"/><circle cx="8.5" cy="6" r="2" fill="#e6e6e6"/></svg>
<svg class="a" style="left:576px;top:5px" width="17" height="15" viewBox="0 0 17 15"><rect x="1" y="1" width="15" height="10.4" rx="2" fill="#1e1e1e" stroke="#ababab" stroke-width="2"/><rect x="3.2" y="3.4" width="10.6" height="5.6" fill="#e6e6e6"/><path d="M8.5 12V14.6M4.2 14.9H12.8" stroke="#e6e6e6" stroke-width="1.4"/></svg>
<svg class="a" style="left:601px;top:5px" width="17" height="16" viewBox="0 0 17 16"><path d="M0 4H4.5Q5 0.8 8 0.8H10Q13 0.8 13.5 4H17V15H0Z" fill="#555555"/><circle cx="9" cy="8.6" r="3.8" fill="#3c3c3c" stroke="#444" stroke-width="0.5"/><circle cx="9" cy="8.6" r="2.6" fill="#555555"/><circle cx="9" cy="8.6" r="1.6" fill="#3a3a3a"/></svg>
</div>
<div class="row" style="top:98px;background:#2b2b2b">
<svg class="a" style="left:133px;top:6px" width="9" height="14" viewBox="0 0 9 14"><path d="M2 1.9L7 6.9L2 11.9" stroke="#d0d0d0" stroke-width="1.4" fill="none"/></svg>
<svg class="a" style="left:150px;top:0px" width="24" height="24" viewBox="0 0 24 24"><path d="M3.6 4.9H20.6L12.1 21.6Z M7.6 7.8L12 15.4L16.4 7.8Z" fill="#c2834d" fill-rule="evenodd" stroke="#c2834d" stroke-width="0.8" stroke-linejoin="round"/></svg>
<div class="nm" style="color:#dcdcdc">test003.PKR.foot<span class="h">-</span>fk.R.000</div>
<svg class="a" style="left:386.4834062499999px;top:2.9px" width="18" height="18" viewBox="0 0 18 18"><circle cx="9" cy="9" r="8.6" fill="#c0606a"/><path d="M9 2.2 V9.6 Q13 9.8 15.6 7.5 A6.9 6.9 0 0 0 9 2.2Z" fill="#262626"/><path d="M9 15.8 V9.6 Q5 9.2 2.6 10.8 A6.9 6.9 0 0 0 9 15.8Z" fill="#262626"/><circle cx="9" cy="9" r="8.6" fill="none" stroke="#1e1e1e" stroke-width="0.6"/></svg>
<svg class="a" style="left:411.2834062499999px;top:2px" width="19" height="19" viewBox="0 0 19 19"><g fill="none" stroke="#1fc797" stroke-width="1.4"><path d="M5.2 3.6H13.6M4.2 5.6L8.3 14.2M14.8 5.6L10.7 14.2"/><rect x="0.9" y="1.5" width="4.2" height="4.2" rx="0.9"/><rect x="13.7" y="1.5" width="4.2" height="4.2" rx="0.9"/><rect x="7.2" y="14.2" width="4.2" height="4.2" rx="0.9"/></g></svg>
<svg class="a" style="left:551px;top:7.5px" width="17" height="12" viewBox="0 0 17 12"><path d="M0.3 6 Q8.5 -3.2 16.7 6 Q8.5 15.2 0.3 6Z" fill="#e6e6e6"/><circle cx="8.5" cy="6" r="4.2" fill="#282828"/><circle cx="8.5" cy="6" r="2" fill="#e6e6e6"/></svg>
<svg class="a" style="left:576px;top:5px" width="17" height="15" viewBox="0 0 17 15"><rect x="1" y="1" width="15" height="10.4" rx="2" fill="#1e1e1e" stroke="#ababab" stroke-width="2"/><rect x="3.2" y="3.4" width="10.6" height="5.6" fill="#e6e6e6"/><path d="M8.5 12V14.6M4.2 14.9H12.8" stroke="#e6e6e6" stroke-width="1.4"/></svg>
<svg class="a" style="left:601px;top:5px" width="17" height="16" viewBox="0 0 17 16"><path d="M0 4H4.5Q5 0.8 8 0.8H10Q13 0.8 13.5 4H17V15H0Z" fill="#555555"/><circle cx="9" cy="8.6" r="3.8" fill="#3c3c3c" stroke="#444" stroke-width="0.5"/><circle cx="9" cy="8.6" r="2.6" fill="#555555"/><circle cx="9" cy="8.6" r="1.6" fill="#3a3a3a"/></svg>
</div>
<div class="row" style="top:123px;background:#272727">
<svg class="a" style="left:133px;top:6px" width="9" height="14" viewBox="0 0 9 14"><path d="M2 1.9L7 6.9L2 11.9" stroke="#d0d0d0" stroke-width="1.4" fill="none"/></svg>
<svg class="a" style="left:150px;top:0px" width="24" height="24" viewBox="0 0 24 24"><path d="M3.6 4.9H20.6L12.1 21.6Z M7.6 7.8L12 15.4L16.4 7.8Z" fill="#c2834d" fill-rule="evenodd" stroke="#c2834d" stroke-width="0.8" stroke-linejoin="round"/></svg>
<div class="nm" style="color:#dcdcdc">test003.PKR.foot<span class="h">-</span>int.L.000</div>
<svg class="a" style="left:387.949875px;top:2.9px" width="18" height="18" viewBox="0 0 18 18"><circle cx="9" cy="9" r="8.6" fill="#c0606a"/><path d="M9 2.2 V9.6 Q13 9.8 15.6 7.5 A6.9 6.9 0 0 0 9 2.2Z" fill="#262626"/><path d="M9 15.8 V9.6 Q5 9.2 2.6 10.8 A6.9 6.9 0 0 0 9 15.8Z" fill="#262626"/><circle cx="9" cy="9" r="8.6" fill="none" stroke="#1e1e1e" stroke-width="0.6"/></svg>
<svg class="a" style="left:412.74987500000003px;top:2px" width="19" height="19" viewBox="0 0 19 19"><g fill="none" stroke="#1fc797" stroke-width="1.4"><path d="M5.2 3.6H13.6M4.2 5.6L8.3 14.2M14.8 5.6L10.7 14.2"/><rect x="0.9" y="1.5" width="4.2" height="4.2" rx="0.9"/><rect x="13.7" y="1.5" width="4.2" height="4.2" rx="0.9"/><rect x="7.2" y="14.2" width="4.2" height="4.2" rx="0.9"/></g></svg>
<svg class="a" style="left:551px;top:7.5px" width="17" height="12" viewBox="0 0 17 12"><path d="M0.3 6 Q8.5 -3.2 16.7 6 Q8.5 15.2 0.3 6Z" fill="#e6e6e6"/><circle cx="8.5" cy="6" r="4.2" fill="#282828"/><circle cx="8.5" cy="6" r="2" fill="#e6e6e6"/></svg>
<svg class="a" style="left:576px;top:5px" width="17" height="15" viewBox="0 0 17 15"><rect x="1" y="1" width="15" height="10.4" rx="2" fill="#1e1e1e" stroke="#ababab" stroke-width="2"/><rect x="3.2" y="3.4" width="10.6" height="5.6" fill="#e6e6e6"/><path d="M8.5 12V14.6M4.2 14.9H12.8" stroke="#e6e6e6" stroke-width="1.4"/></svg>
<svg class="a" style="left:601px;top:5px" width="17" height="16" viewBox="0 0 17 16"><path d="M0 4H4.5Q5 0.8 8 0.8H10Q13 0.8 13.5 4H17V15H0Z" fill="#555555"/><circle cx="9" cy="8.6" r="3.8" fill="#3c3c3c" stroke="#444" stroke-width="0.5"/><circle cx="9" cy="8.6" r="2.6" fill="#555555"/><circle cx="9" cy="8.6" r="1.6" fill="#3a3a3a"/></svg>
</div>
<div class="row" style="top:148px;background:#2b2b2b">
<svg class="a" style="left:133px;top:6px" width="9" height="14" viewBox="0 0 9 14"><path d="M2 1.9L7 6.9L2 11.9" stroke="#d0d0d0" stroke-width="1.4" fill="none"/></svg>
<svg class="a" style="left:150px;top:0px" width="24" height="24" viewBox="0 0 24 24"><path d="M3.6 4.9H20.6L12.1 21.6Z M7.6 7.8L12 15.4L16.4 7.8Z" fill="#c2834d" fill-rule="evenodd" stroke="#c2834d" stroke-width="0.8" stroke-linejoin="round"/></svg>
<div class="nm" style="color:#dcdcdc">test003.PKR.foot<span class="h">-</span>int.R.000</div>
<svg class="a" style="left:390.49110937499995px;top:2.9px" width="18" height="18" viewBox="0 0 18 18"><circle cx="9" cy="9" r="8.6" fill="#c0606a"/><path d="M9 2.2 V9.6 Q13 9.8 15.6 7.5 A6.9 6.9 0 0 0 9 2.2Z" fill="#262626"/><path d="M9 15.8 V9.6 Q5 9.2 2.6 10.8 A6.9 6.9 0 0 0 9 15.8Z" fill="#262626"/><circle cx="9" cy="9" r="8.6" fill="none" stroke="#1e1e1e" stroke-width="0.6"/></svg>
<svg class="a" style="left:415.29110937499996px;top:2px" width="19" height="19" viewBox="0 0 19 19"><g fill="none" stroke="#1fc797" stroke-width="1.4"><path d="M5.2 3.6H13.6M4.2 5.6L8.3 14.2M14.8 5.6L10.7 14.2"/><rect x="0.9" y="1.5" width="4.2" height="4.2" rx="0.9"/><rect x="13.7" y="1.5" width="4.2" height="4.2" rx="0.9"/><rect x="7.2" y="14.2" width="4.2" height="4.2" rx="0.9"/></g></svg>
<svg class="a" style="left:551px;top:7.5px" width="17" height="12" viewBox="0 0 17 12"><path d="M0.3 6 Q8.5 -3.2 16.7 6 Q8.5 15.2 0.3 6Z" fill="#e6e6e6"/><circle cx="8.5" cy="6" r="4.2" fill="#282828"/><circle cx="8.5" cy="6" r="2" fill="#e6e6e6"/></svg>
<svg class="a" style="left:576px;top:5px" width="17" height="15" viewBox="0 0 17 15"><rect x="1" y="1" width="15" height="10.4" rx="2" fill="#1e1e1e" stroke="#ababab" stroke-width="2"/><rect x="3.2" y="3.4" width="10.6" height="5.6" fill="#e6e6e6"/><path d="M8.5 12V14.6M4.2 14.9H12.8" stroke="#e6e6e6" stroke-width="1.4"/></svg>
<svg class="a" style="left:601px;top:5px" width="17" height="16" viewBox="0 0 17 16"><path d="M0 4H4.5Q5 0.8 8 0.8H10Q13 0.8 13.5 4H17V15H0Z" fill="#555555"/><circle cx="9" cy="8.6" r="3.8" fill="#3c3c3c" stroke="#444" stroke-width="0.5"/><circle cx="9" cy="8.6" r="2.6" fill="#555555"/><circle cx="9" cy="8.6" r="1.6" fill="#3a3a3a"/></svg>
</div>
<div class="row" style="top:173px;background:#272727">
<svg class="a" style="left:133px;top:6px" width="9" height="14" viewBox="0 0 9 14"><path d="M2 1.9L7 6.9L2 11.9" stroke="#d0d0d0" stroke-width="1.4" fill="none"/></svg>
<svg class="a" style="left:150px;top:0px" width="24" height="24" viewBox="0 0 24 24"><path d="M3.6 4.9H20.6L12.1 21.6Z M7.6 7.8L12 15.4L16.4 7.8Z" fill="#c2834d" fill-rule="evenodd" stroke="#c2834d" stroke-width="0.8" stroke-linejoin="round"/></svg>
<div class="nm" style="color:#dcdcdc">test003.PKR.foot<span class="h">-</span>mid.L.000</div>
<svg class="a" style="left:396.44376562499997px;top:2.9px" width="18" height="18" viewBox="0 0 18 18"><circle cx="9" cy="9" r="8.6" fill="#c0606a"/><path d="M9 2.2 V9.6 Q13 9.8 15.6 7.5 A6.9 6.9 0 0 0 9 2.2Z" fill="#262626"/><path d="M9 15.8 V9.6 Q5 9.2 2.6 10.8 A6.9 6.9 0 0 0 9 15.8Z" fill="#262626"/><circle cx="9" cy="9" r="8.6" fill="none" stroke="#1e1e1e" stroke-width="0.6"/></svg>
<svg class="a" style="left:421.243765625px;top:2px" width="19" height="19" viewBox="0 0 19 19"><g fill="none" stroke="#1fc797" stroke-width="1.4"><path d="M5.2 3.6H13.6M4.2 5.6L8.3 14.2M14.8 5.6L10.7 14.2"/><rect x="0.9" y="1.5" width="4.2" height="4.2" rx="0.9"/><rect x="13.7" y="1.5" width="4.2" height="4.2" rx="0.9"/><rect x="7.2" y="14.2" width="4.2" height="4.2" rx="0.9"/></g></svg>
<svg class="a" style="left:551px;top:7.5px" width="17" height="12" viewBox="0 0 17 12"><path d="M0.3 6 Q8.5 -3.2 16.7 6 Q8.5 15.2 0.3 6Z" fill="#e6e6e6"/><circle cx="8.5" cy="6" r="4.2" fill="#282828"/><circle cx="8.5" cy="6" r="2" fill="#e6e6e6"/></svg>
<svg class="a" style="left:576px;top:5px" width="17" height="15" viewBox="0 0 17 15"><rect x="1" y="1" width="15" height="10.4" rx="2" fill="#1e1e1e" stroke="#ababab" stroke-width="2"/><rect x="3.2" y="3.4" width="10.6" height="5.6" fill="#e6e6e6"/><path d="M8.5 12V14.6M4.2 14.9H12.8" stroke="#e6e6e6" stroke-width="1.4"/></svg>
<svg class="a" style="left:601px;top:5px" width="17" height="16" viewBox="0 0 17 16"><path d="M0 4H4.5Q5 0.8 8 0.8H10Q13 0.8 13.5 4H17V15H0Z" fill="#555555"/><circle cx="9" cy="8.6" r="3.8" fill="#3c3c3c" stroke="#444" stroke-width="0.5"/><circle cx="9" cy="8.6" r="2.6" fill="#555555"/><circle cx="9" cy="8.6" r="1.6" fill="#3a3a3a"/></svg>
</div>
<div class="row" style="top:198px;background:#2b2b2b">
<svg class="a" style="left:133px;top:6px" width="9" height="14" viewBox="0 0 9 14"><path d="M2 1.9L7 6.9L2 11.9" stroke="#d0d0d0" stroke-width="1.4" fill="none"/></svg>
<svg class="a" style="left:150px;top:0px" width="24" height="24" viewBox="0 0 24 24"><path d="M3.6 4.9H20.6L12.1 21.6Z M7.6 7.8L12 15.4L16.4 7.8Z" fill="#c2834d" fill-rule="evenodd" stroke="#c2834d" stroke-width="0.8" stroke-linejoin="round"/></svg>
<div class="nm" style="color:#dcdcdc">test003.PKR.foot<span class="h">-</span>mid.R.000</div>
<svg class="a" style="left:398.9849999999999px;top:2.9px" width="18" height="18" viewBox="0 0 18 18"><circle cx="9" cy="9" r="8.6" fill="#c0606a"/><path d="M9 2.2 V9.6 Q13 9.8 15.6 7.5 A6.9 6.9 0 0 0 9 2.2Z" fill="#262626"/><path d="M9 15.8 V9.6 Q5 9.2 2.6 10.8 A6.9 6.9 0 0 0 9 15.8Z" fill="#262626"/><circle cx="9" cy="9" r="8.6" fill="none" stroke="#1e1e1e" stroke-width="0.6"/></svg>
<svg class="a" style="left:423.7849999999999px;top:2px" width="19" height="19" viewBox="0 0 19 19"><g fill="none" stroke="#1fc797" stroke-width="1.4"><path d="M5.2 3.6H13.6M4.2 5.6L8.3 14.2M14.8 5.6L10.7 14.2"/><rect x="0.9" y="1.5" width="4.2" height="4.2" rx="0.9"/><rect x="13.7" y="1.5" width="4.2" height="4.2" rx="0.9"/><rect x="7.2" y="14.2" width="4.2" height="4.2" rx="0.9"/></g></svg>
<svg class="a" style="left:551px;top:7.5px" width="17" height="12" viewBox="0 0 17 12"><path d="M0.3 6 Q8.5 -3.2 16.7 6 Q8.5 15.2 0.3 6Z" fill="#e6e6e6"/><circle cx="8.5" cy="6" r="4.2" fill="#282828"/><circle cx="8.5" cy="6" r="2" fill="#e6e6e6"/></svg>
<svg class="a" style="left:576px;top:5px" width="17" height="15" viewBox="0 0 17 15"><rect x="1" y="1" width="15" height="10.4" rx="2" fill="#1e1e1e" stroke="#ababab" stroke-width="2"/><rect x="3.2" y="3.4" width="10.6" height="5.6" fill="#e6e6e6"/><path d="M8.5 12V14.6M4.2 14.9H12.8" stroke="#e6e6e6" stroke-width="1.4"/></svg>
<svg class="a" style="left:601px;top:5px" width="17" height="16" viewBox="0 0 17 16"><path d="M0 4H4.5Q5 0.8 8 0.8H10Q13 0.8 13.5 4H17V15H0Z" fill="#555555"/><circle cx="9" cy="8.6" r="3.8" fill="#3c3c3c" stroke="#444" stroke-width="0.5"/><circle cx="9" cy="8.6" r="2.6" fill="#555555"/><circle cx="9" cy="8.6" r="1.6" fill="#3a3a3a"/></svg>
</div>
<div class="row" style="top:223px;background:#272727">
<svg class="a" style="left:133px;top:6px" width="9" height="14" viewBox="0 0 9 14"><path d="M2 1.9L7 6.9L2 11.9" stroke="#d0d0d0" stroke-width="1.4" fill="none"/></svg>
<svg class="a" style="left:150px;top:0px" width="24" height="24" viewBox="0 0 24 24"><path d="M3.6 4.9H20.6L12.1 21.6Z M7.6 7.8L12 15.4L16.4 7.8Z" fill="#c2834d" fill-rule="evenodd" stroke="#c2834d" stroke-width="0.8" stroke-linejoin="round"/></svg>
<div class="nm" style="color:#dcdcdc">test003.PKR.foot<span class="h">-</span>mid<span class="h">-</span>front.L.000</div>
<svg class="a" style="left:436.65014062499995px;top:2.9px" width="18" height="18" viewBox="0 0 18 18"><circle cx="9" cy="9" r="8.6" fill="#c0606a"/><path d="M9 2.2 V9.6 Q13 9.8 15.6 7.5 A6.9 6.9 0 0 0 9 2.2Z" fill="#262626"/><path d="M9 15.8 V9.6 Q5 9.2 2.6 10.8 A6.9 6.9 0 0 0 9 15.8Z" fill="#262626"/><circle cx="9" cy="9" r="8.6" fill="none" stroke="#1e1e1e" stroke-width="0.6"/></svg>
<svg class="a" style="left:461.45014062499996px;top:2px" width="19" height="19" viewBox="0 0 19 19"><g fill="none" stroke="#1fc797" stroke-width="1.4"><path d="M5.2 3.6H13.6M4.2 5.6L8.3 14.2M14.8 5.6L10.7 14.2"/><rect x="0.9" y="1.5" width="4.2" height="4.2" rx="0.9"/><rect x="13.7" y="1.5" width="4.2" height="4.2" rx="0.9"/><rect x="7.2" y="14.2" width="4.2" height="4.2" rx="0.9"/></g></svg>
<svg class="a" style="left:551px;top:7.5px" width="17" height="12" viewBox="0 0 17 12"><path d="M0.3 6 Q8.5 -3.2 16.7 6 Q8.5 15.2 0.3 6Z" fill="#e6e6e6"/><circle cx="8.5" cy="6" r="4.2" fill="#282828"/><circle cx="8.5" cy="6" r="2" fill="#e6e6e6"/></svg>
<svg class="a" style="left:576px;top:5px" width="17" height="15" viewBox="0 0 17 15"><rect x="1" y="1" width="15" height="10.4" rx="2" fill="#1e1e1e" stroke="#ababab" stroke-width="2"/><rect x="3.2" y="3.4" width="10.6" height="5.6" fill="#e6e6e6"/><path d="M8.5 12V14.6M4.2 14.9H12.8" stroke="#e6e6e6" stroke-width="1.4"/></svg>
<svg class="a" style="left:601px;top:5px" width="17" height="16" viewBox="0 0 17 16"><path d="M0 4H4.5Q5 0.8 8 0.8H10Q13 0.8 13.5 4H17V15H0Z" fill="#555555"/><circle cx="9" cy="8.6" r="3.8" fill="#3c3c3c" stroke="#444" stroke-width="0.5"/><circle cx="9" cy="8.6" r="2.6" fill="#555555"/><circle cx="9" cy="8.6" r="1.6" fill="#3a3a3a"/></svg>
</div>
<div class="row" style="top:248px;background:#2b2b2b">
<svg class="a" style="left:133px;top:6px" width="9" height="14" viewBox="0 0 9 14"><path d="M2 1.9L7 6.9L2 11.9" stroke="#d0d0d0" stroke-width="1.4" fill="none"/></svg>
<svg class="a" style="left:150px;top:0px" width="24" height="24" viewBox="0 0 24 24"><path d="M3.6 4.9H20.6L12.1 21.6Z M7.6 7.8L12 15.4L16.4 7.8Z" fill="#c2834d" fill-rule="evenodd" stroke="#c2834d" stroke-width="0.8" stroke-linejoin="round"/></svg>
<div class="nm" style="color:#dcdcdc">test003.PKR.foot<span class="h">-</span>mid<span class="h">-</span>front.R.000</div>
<svg class="a" style="left:439.1913749999999px;top:2.9px" width="18" height="18" viewBox="0 0 18 18"><circle cx="9" cy="9" r="8.6" fill="#c0606a"/><path d="M9 2.2 V9.6 Q13 9.8 15.6 7.5 A6.9 6.9 0 0 0 9 2.2Z" fill="#262626"/><path d="M9 15.8 V9.6 Q5 9.2 2.6 10.8 A6.9 6.9 0 0 0 9 15.8Z" fill="#262626"/><circle cx="9" cy="9" r="8.6" fill="none" stroke="#1e1e1e" stroke-width="0.6"/></svg>
<svg class="a" style="left:463.9913749999999px;top:2px" width="19" height="19" viewBox="0 0 19 19"><g fill="none" stroke="#1fc797" stroke-width="1.4"><path d="M5.2 3.6H13.6M4.2 5.6L8.3 14.2M14.8 5.6L10.7 14.2"/><rect x="0.9" y="1.5" width="4.2" height="4.2" rx="0.9"/><rect x="13.7" y="1.5" width="4.2" height="4.2" rx="0.9"/><rect x="7.2" y="14.2" width="4.2" height="4.2" rx="0.9"/></g></svg>
<svg class="a" style="left:551px;top:7.5px" width="17" height="12" viewBox="0 0 17 12"><path d="M0.3 6 Q8.5 -3.2 16.7 6 Q8.5 15.2 0.3 6Z" fill="#e6e6e6"/><circle cx="8.5" cy="6" r="4.2" fill="#282828"/><circle cx="8.5" cy="6" r="2" fill="#e6e6e6"/></svg>
<svg class="a" style="left:576px;top:5px" width="17" height="15" viewBox="0 0 17 15"><rect x="1" y="1" width="15" height="10.4" rx="2" fill="#1e1e1e" stroke="#ababab" stroke-width="2"/><rect x="3.2" y="3.4" width="10.6" height="5.6" fill="#e6e6e6"/><path d="M8.5 12V14.6M4.2 14.9H12.8" stroke="#e6e6e6" stroke-width="1.4"/></svg>
<svg class="a" style="left:601px;top:5px" width="17" height="16" viewBox="0 0 17 16"><path d="M0 4H4.5Q5 0.8 8 0.8H10Q13 0.8 13.5 4H17V15H0Z" fill="#555555"/><circle cx="9" cy="8.6" r="3.8" fill="#3c3c3c" stroke="#444" stroke-width="0.5"/><circle cx="9" cy="8.6" r="2.6" fill="#555555"/><circle cx="9" cy="8.6" r="1.6" fill="#3a3a3a"/></svg>
</div>
<div class="row" style="top:273px;background:#272727">
<svg class="a" style="left:133px;top:6px" width="9" height="14" viewBox="0 0 9 14"><path d="M2 1.9L7 6.9L2 11.9" stroke="#d0d0d0" stroke-width="1.4" fill="none"/></svg>
<svg class="a" style="left:150px;top:0px" width="24" height="24" viewBox="0 0 24 24"><path d="M3.6 4.9H20.6L12.1 21.6Z M7.6 7.8L12 15.4L16.4 7.8Z" fill="#c2834d" fill-rule="evenodd" stroke="#c2834d" stroke-width="0.8" stroke-linejoin="round"/></svg>
<div class="nm" style="color:#dcdcdc">test003.PKR.foot<span class="h">-</span>top.L.000</div>
<svg class="a" style="left:393.05864062499995px;top:2.9px" width="18" height="18" viewBox="0 0 18 18"><circle cx="9" cy="9" r="8.6" fill="#c0606a"/><path d="M9 2.2 V9.6 Q13 9.8 15.6 7.5 A6.9 6.9 0 0 0 9 2.2Z" fill="#262626"/><path d="M9 15.8 V9.6 Q5 9.2 2.6 10.8 A6.9 6.9 0 0 0 9 15.8Z" fill="#262626"/><circle cx="9" cy="9" r="8.6" fill="none" stroke="#1e1e1e" stroke-width="0.6"/></svg>
<svg class="a" style="left:417.85864062499996px;top:2px" width="19" height="19" viewBox="0 0 19 19"><g fill="none" stroke="#1fc797" stroke-width="1.4"><path d="M5.2 3.6H13.6M4.2 5.6L8.3 14.2M14.8 5.6L10.7 14.2"/><rect x="0.9" y="1.5" width="4.2" height="4.2" rx="0.9"/><rect x="13.7" y="1.5" width="4.2" height="4.2" rx="0.9"/><rect x="7.2" y="14.2" width="4.2" height="4.2" rx="0.9"/></g></svg>
<svg class="a" style="left:551px;top:7.5px" width="17" height="12" viewBox="0 0 17 12"><path d="M0.3 6 Q8.5 -3.2 16.7 6 Q8.5 15.2 0.3 6Z" fill="#e6e6e6"/><circle cx="8.5" cy="6" r="4.2" fill="#282828"/><circle cx="8.5" cy="6" r="2" fill="#e6e6e6"/></svg>
<svg class="a" style="left:576px;top:5px" width="17" height="15" viewBox="0 0 17 15"><rect x="1" y="1" width="15" height="10.4" rx="2" fill="#1e1e1e" stroke="#ababab" stroke-width="2"/><rect x="3.2" y="3.4" width="10.6" height="5.6" fill="#e6e6e6"/><path d="M8.5 12V14.6M4.2 14.9H12.8" stroke="#e6e6e6" stroke-width="1.4"/></svg>
<svg class="a" style="left:601px;top:5px" width="17" height="16" viewBox="0 0 17 16"><path d="M0 4H4.5Q5 0.8 8 0.8H10Q13 0.8 13.5 4H17V15H0Z" fill="#555555"/><circle cx="9" cy="8.6" r="3.8" fill="#3c3c3c" stroke="#444" stroke-width="0.5"/><circle cx="9" cy="8.6" r="2.6" fill="#555555"/><circle cx="9" cy="8.6" r="1.6" fill="#3a3a3a"/></svg>
</div>
<div class="row" style="top:298px;background:#2b2b2b">
<svg class="a" style="left:133px;top:6px" width="9" height="14" viewBox="0 0 9 14"><path d="M2 1.9L7 6.9L2 11.9" stroke="#d0d0d0" stroke-width="1.4" fill="none"/></svg>
<svg class="a" style="left:150px;top:0px" width="24" height="24" viewBox="0 0 24 24"><path d="M3.6 4.9H20.6L12.1 21.6Z M7.6 7.8L12 15.4L16.4 7.8Z" fill="#c2834d" fill-rule="evenodd" stroke="#c2834d" stroke-width="0.8" stroke-linejoin="round"/></svg>
<div class="nm" style="color:#dcdcdc">test003.PKR.foot<span class="h">-</span>top.R.000</div>
<svg class="a" style="left:395.5998749999999px;top:2.9px" width="18" height="18" viewBox="0 0 18 18"><circle cx="9" cy="9" r="8.6" fill="#c0606a"/><path d="M9 2.2 V9.6 Q13 9.8 15.6 7.5 A6.9 6.9 0 0 0 9 2.2Z" fill="#262626"/><path d="M9 15.8 V9.6 Q5 9.2 2.6 10.8 A6.9 6.9 0 0 0 9 15.8Z" fill="#262626"/><circle cx="9" cy="9" r="8.6" fill="none" stroke="#1e1e1e" stroke-width="0.6"/></svg>
<svg class="a" style="left:420.3998749999999px;top:2px" width="19" height="19" viewBox="0 0 19 19"><g fill="none" stroke="#1fc797" stroke-width="1.4"><path d="M5.2 3.6H13.6M4.2 5.6L8.3 14.2M14.8 5.6L10.7 14.2"/><rect x="0.9" y="1.5" width="4.2" height="4.2" rx="0.9"/><rect x="13.7" y="1.5" width="4.2" height="4.2" rx="0.9"/><rect x="7.2" y="14.2" width="4.2" height="4.2" rx="0.9"/></g></svg>
<svg class="a" style="left:551px;top:7.5px" width="17" height="12" viewBox="0 0 17 12"><path d="M0.3 6 Q8.5 -3.2 16.7 6 Q8.5 15.2 0.3 6Z" fill="#e6e6e6"/><circle cx="8.5" cy="6" r="4.2" fill="#282828"/><circle cx="8.5" cy="6" r="2" fill="#e6e6e6"/></svg>
<svg class="a" style="left:576px;top:5px" width="17" height="15" viewBox="0 0 17 15"><rect x="1" y="1" width="15" height="10.4" rx="2" fill="#1e1e1e" stroke="#ababab" stroke-width="2"/><rect x="3.2" y="3.4" width="10.6" height="5.6" fill="#e6e6e6"/><path d="M8.5 12V14.6M4.2 14.9H12.8" stroke="#e6e6e6" stroke-width="1.4"/></svg>
<svg class="a" style="left:601px;top:5px" width="17" height="16" viewBox="0 0 17 16"><path d="M0 4H4.5Q5 0.8 8 0.8H10Q13 0.8 13.5 4H17V15H0Z" fill="#555555"/><circle cx="9" cy="8.6" r="3.8" fill="#3c3c3c" stroke="#444" stroke-width="0.5"/><circle cx="9" cy="8.6" r="2.6" fill="#555555"/><circle cx="9" cy="8.6" r="1.6" fill="#3a3a3a"/></svg>
</div>
<div class="row" style="top:323px;background:#272727">
<svg class="a" style="left:133px;top:6px" width="9" height="14" viewBox="0 0 9 14"><path d="M2 1.9L7 6.9L2 11.9" stroke="#d0d0d0" stroke-width="1.4" fill="none"/></svg>
<svg class="a" style="left:150px;top:0px" width="24" height="24" viewBox="0 0 24 24"><path d="M3.6 4.9H20.6L12.1 21.6Z M7.6 7.8L12 15.4L16.4 7.8Z" fill="#c2834d" fill-rule="evenodd" stroke="#c2834d" stroke-width="0.8" stroke-linejoin="round"/></svg>
<div class="nm" style="color:#dcdcdc">test003.PKR.glasses.000</div>
<svg class="a" style="left:375.04509375px;top:2.9px" width="18" height="18" viewBox="0 0 18 18"><circle cx="9" cy="9" r="8.6" fill="#c0606a"/><path d="M9 2.2 V9.6 Q13 9.8 15.6 7.5 A6.9 6.9 0 0 0 9 2.2Z" fill="#262626"/><path d="M9 15.8 V9.6 Q5 9.2 2.6 10.8 A6.9 6.9 0 0 0 9 15.8Z" fill="#262626"/><circle cx="9" cy="9" r="8.6" fill="none" stroke="#1e1e1e" stroke-width="0.6"/></svg>
<svg class="a" style="left:399.84509375px;top:2px" width="19" height="19" viewBox="0 0 19 19"><g fill="none" stroke="#1fc797" stroke-width="1.4"><path d="M5.2 3.6H13.6M4.2 5.6L8.3 14.2M14.8 5.6L10.7 14.2"/><rect x="0.9" y="1.5" width="4.2" height="4.2" rx="0.9"/><rect x="13.7" y="1.5" width="4.2" height="4.2" rx="0.9"/><rect x="7.2" y="14.2" width="4.2" height="4.2" rx="0.9"/></g></svg>
<svg class="a" style="left:551px;top:7.5px" width="17" height="12" viewBox="0 0 17 12"><path d="M0.3 6 Q8.5 -3.2 16.7 6 Q8.5 15.2 0.3 6Z" fill="#e6e6e6"/><circle cx="8.5" cy="6" r="4.2" fill="#282828"/><circle cx="8.5" cy="6" r="2" fill="#e6e6e6"/></svg>
<svg class="a" style="left:576px;top:5px" width="17" height="15" viewBox="0 0 17 15"><rect x="1" y="1" width="15" height="10.4" rx="2" fill="#1e1e1e" stroke="#ababab" stroke-width="2"/><rect x="3.2" y="3.4" width="10.6" height="5.6" fill="#e6e6e6"/><path d="M8.5 12V14.6M4.2 14.9H12.8" stroke="#e6e6e6" stroke-width="1.4"/></svg>
<svg class="a" style="left:601px;top:5px" width="17" height="16" viewBox="0 0 17 16"><path d="M0 4H4.5Q5 0.8 8 0.8H10Q13 0.8 13.5 4H17V15H0Z" fill="#555555"/><circle cx="9" cy="8.6" r="3.8" fill="#3c3c3c" stroke="#444" stroke-width="0.5"/><circle cx="9" cy="8.6" r="2.6" fill="#555555"/><circle cx="9" cy="8.6" r="1.6" fill="#3a3a3a"/></svg>
</div>
<div class="row" style="top:348px;background:#2b2b2b">
<svg class="a" style="left:133px;top:6px" width="9" height="14" viewBox="0 0 9 14"><path d="M2 1.9L7 6.9L2 11.9" stroke="#d0d0d0" stroke-width="1.4" fill="none"/></svg>
<svg class="a" style="left:150px;top:0px" width="24" height="24" viewBox="0 0 24 24"><path d="M3.6 4.9H20.6L12.1 21.6Z M7.6 7.8L12 15.4L16.4 7.8Z" fill="#c2834d" fill-rule="evenodd" stroke="#c2834d" stroke-width="0.8" stroke-linejoin="round"/></svg>
<div class="nm" style="color:#dcdcdc">test003.PKR.glasses<span class="h">-</span>offset.000</div>
<svg class="a" style="left:421.5302656250001px;top:2.9px" width="18" height="18" viewBox="0 0 18 18"><circle cx="9" cy="9" r="8.6" fill="#c0606a"/><path d="M9 2.2 V9.6 Q13 9.8 15.6 7.5 A6.9 6.9 0 0 0 9 2.2Z" fill="#262626"/><path d="M9 15.8 V9.6 Q5 9.2 2.6 10.8 A6.9 6.9 0 0 0 9 15.8Z" fill="#262626"/><circle cx="9" cy="9" r="8.6" fill="none" stroke="#1e1e1e" stroke-width="0.6"/></svg>
<svg class="a" style="left:446.3302656250001px;top:2px" width="19" height="19" viewBox="0 0 19 19"><g fill="none" stroke="#1fc797" stroke-width="1.4"><path d="M5.2 3.6H13.6M4.2 5.6L8.3 14.2M14.8 5.6L10.7 14.2"/><rect x="0.9" y="1.5" width="4.2" height="4.2" rx="0.9"/><rect x="13.7" y="1.5" width="4.2" height="4.2" rx="0.9"/><rect x="7.2" y="14.2" width="4.2" height="4.2" rx="0.9"/></g></svg>
<svg class="a" style="left:551px;top:7.5px" width="17" height="12" viewBox="0 0 17 12"><path d="M0.3 6 Q8.5 -3.2 16.7 6 Q8.5 15.2 0.3 6Z" fill="#e6e6e6"/><circle cx="8.5" cy="6" r="4.2" fill="#282828"/><circle cx="8.5" cy="6" r="2" fill="#e6e6e6"/></svg>
<svg class="a" style="left:576px;top:5px" width="17" height="15" viewBox="0 0 17 15"><rect x="1" y="1" width="15" height="10.4" rx="2" fill="#1e1e1e" stroke="#ababab" stroke-width="2"/><rect x="3.2" y="3.4" width="10.6" height="5.6" fill="#e6e6e6"/><path d="M8.5 12V14.6M4.2 14.9H12.8" stroke="#e6e6e6" stroke-width="1.4"/></svg>
<svg class="a" style="left:601px;top:5px" width="17" height="16" viewBox="0 0 17 16"><path d="M0 4H4.5Q5 0.8 8 0.8H10Q13 0.8 13.5 4H17V15H0Z" fill="#555555"/><circle cx="9" cy="8.6" r="3.8" fill="#3c3c3c" stroke="#444" stroke-width="0.5"/><circle cx="9" cy="8.6" r="2.6" fill="#555555"/><circle cx="9" cy="8.6" r="1.6" fill="#3a3a3a"/></svg>
</div>
<div class="row" style="top:373px;background:#272727">
<svg class="a" style="left:133px;top:6px" width="9" height="14" viewBox="0 0 9 14"><path d="M2 1.9L7 6.9L2 11.9" stroke="#d0d0d0" stroke-width="1.4" fill="none"/></svg>
<svg class="a" style="left:150px;top:0px" width="24" height="24" viewBox="0 0 24 24"><path d="M3.6 4.9H20.6L12.1 21.6Z M7.6 7.8L12 15.4L16.4 7.8Z" fill="#c2834d" fill-rule="evenodd" stroke="#c2834d" stroke-width="0.8" stroke-linejoin="round"/></svg>
<div class="nm" style="color:#dcdcdc">test003.PKR.hand.L.000</div>
<svg class="a" style="left:370.2126250000001px;top:2.9px" width="18" height="18" viewBox="0 0 18 18"><circle cx="9" cy="9" r="8.6" fill="#c0606a"/><path d="M9 2.2 V9.6 Q13 9.8 15.6 7.5 A6.9 6.9 0 0 0 9 2.2Z" fill="#262626"/><path d="M9 15.8 V9.6 Q5 9.2 2.6 10.8 A6.9 6.9 0 0 0 9 15.8Z" fill="#262626"/><circle cx="9" cy="9" r="8.6" fill="none" stroke="#1e1e1e" stroke-width="0.6"/></svg>
<svg class="a" style="left:395.0126250000001px;top:2px" width="19" height="19" viewBox="0 0 19 19"><g fill="none" stroke="#1fc797" stroke-width="1.4"><path d="M5.2 3.6H13.6M4.2 5.6L8.3 14.2M14.8 5.6L10.7 14.2"/><rect x="0.9" y="1.5" width="4.2" height="4.2" rx="0.9"/><rect x="13.7" y="1.5" width="4.2" height="4.2" rx="0.9"/><rect x="7.2" y="14.2" width="4.2" height="4.2" rx="0.9"/></g></svg>
<svg class="a" style="left:551px;top:7.5px" width="17" height="12" viewBox="0 0 17 12"><path d="M0.3 6 Q8.5 -3.2 16.7 6 Q8.5 15.2 0.3 6Z" fill="#e6e6e6"/><circle cx="8.5" cy="6" r="4.2" fill="#282828"/><circle cx="8.5" cy="6" r="2" fill="#e6e6e6"/></svg>
<svg class="a" style="left:576px;top:5px" width="17" height="15" viewBox="0 0 17 15"><rect x="1" y="1" width="15" height="10.4" rx="2" fill="#1e1e1e" stroke="#ababab" stroke-width="2"/><rect x="3.2" y="3.4" width="10.6" height="5.6" fill="#e6e6e6"/><path d="M8.5 12V14.6M4.2 14.9H12.8" stroke="#e6e6e6" stroke-width="1.4"/></svg>
<svg class="a" style="left:601px;top:5px" width="17" height="16" viewBox="0 0 17 16"><path d="M0 4H4.5Q5 0.8 8 0.8H10Q13 0.8 13.5 4H17V15H0Z" fill="#555555"/><circle cx="9" cy="8.6" r="3.8" fill="#3c3c3c" stroke="#444" stroke-width="0.5"/><circle cx="9" cy="8.6" r="2.6" fill="#555555"/><circle cx="9" cy="8.6" r="1.6" fill="#3a3a3a"/></svg>
</div>
<div class="row" style="top:398px;background:#2b2b2b">
<svg class="a" style="left:133px;top:6px" width="9" height="14" viewBox="0 0 9 14"><path d="M2 1.9L7 6.9L2 11.9" stroke="#d0d0d0" stroke-width="1.4" fill="none"/></svg>
<svg class="a" style="left:150px;top:0px" width="24" height="24" viewBox="0 0 24 24"><path d="M3.6 4.9H20.6L12.1 21.6Z M7.6 7.8L12 15.4L16.4 7.8Z" fill="#c2834d" fill-rule="evenodd" stroke="#c2834d" stroke-width="0.8" stroke-linejoin="round"/></svg>
<div class="nm" style="color:#dcdcdc">test003.PKR.hand.R.000</div>
<svg class="a" style="left:372.75385937500005px;top:2.9px" width="18" height="18" viewBox="0 0 18 18"><circle cx="9" cy="9" r="8.6" fill="#c0606a"/><path d="M9 2.2 V9.6 Q13 9.8 15.6 7.5 A6.9 6.9 0 0 0 9 2.2Z" fill="#262626"/><path d="M9 15.8 V9.6 Q5 9.2 2.6 10.8 A6.9 6.9 0 0 0 9 15.8Z" fill="#262626"/><circle cx="9" cy="9" r="8.6" fill="none" stroke="#1e1e1e" stroke-width="0.6"/></svg>
<svg class="a" style="left:397.55385937500006px;top:2px" width="19" height="19" viewBox="0 0 19 19"><g fill="none" stroke="#1fc797" stroke-width="1.4"><path d="M5.2 3.6H13.6M4.2 5.6L8.3 14.2M14.8 5.6L10.7 14.2"/><rect x="0.9" y="1.5" width="4.2" height="4.2" rx="0.9"/><rect x="13.7" y="1.5" width="4.2" height="4.2" rx="0.9"/><rect x="7.2" y="14.2" width="4.2" height="4.2" rx="0.9"/></g></svg>
<svg class="a" style="left:551px;top:7.5px" width="17" height="12" viewBox="0 0 17 12"><path d="M0.3 6 Q8.5 -3.2 16.7 6 Q8.5 15.2 0.3 6Z" fill="#e6e6e6"/><circle cx="8.5" cy="6" r="4.2" fill="#282828"/><circle cx="8.5" cy="6" r="2" fill="#e6e6e6"/></svg>
<svg class="a" style="left:576px;top:5px" width="17" height="15" viewBox="0 0 17 15"><rect x="1" y="1" width="15" height="10.4" rx="2" fill="#1e1e1e" stroke="#ababab" stroke-width="2"/><rect x="3.2" y="3.4" width="10.6" height="5.6" fill="#e6e6e6"/><path d="M8.5 12V14.6M4.2 14.9H12.8" stroke="#e6e6e6" stroke-width="1.4"/></svg>
<svg class="a" style="left:601px;top:5px" width="17" height="16" viewBox="0 0 17 16"><path d="M0 4H4.5Q5 0.8 8 0.8H10Q13 0.8 13.5 4H17V15H0Z" fill="#555555"/><circle cx="9" cy="8.6" r="3.8" fill="#3c3c3c" stroke="#444" stroke-width="0.5"/><circle cx="9" cy="8.6" r="2.6" fill="#555555"/><circle cx="9" cy="8.6" r="1.6" fill="#3a3a3a"/></svg>
</div>
<div class="row" style="top:423px;background:#272727">
<svg class="a" style="left:133px;top:6px" width="9" height="14" viewBox="0 0 9 14"><path d="M2 1.9L7 6.9L2 11.9" stroke="#d0d0d0" stroke-width="1.4" fill="none"/></svg>
<svg class="a" style="left:150px;top:0px" width="24" height="24" viewBox="0 0 24 24"><path d="M3.6 4.9H20.6L12.1 21.6Z M7.6 7.8L12 15.4L16.4 7.8Z" fill="#c2834d" fill-rule="evenodd" stroke="#c2834d" stroke-width="0.8" stroke-linejoin="round"/></svg>
<div class="nm" style="color:#dcdcdc">test003.PKR.hand<span class="h">-</span>fk.L.000</div>
<svg class="a" style="left:392.45757812500005px;top:2.9px" width="18" height="18" viewBox="0 0 18 18"><circle cx="9" cy="9" r="8.6" fill="#c0606a"/><path d="M9 2.2 V9.6 Q13 9.8 15.6 7.5 A6.9 6.9 0 0 0 9 2.2Z" fill="#262626"/><path d="M9 15.8 V9.6 Q5 9.2 2.6 10.8 A6.9 6.9 0 0 0 9 15.8Z" fill="#262626"/><circle cx="9" cy="9" r="8.6" fill="none" stroke="#1e1e1e" stroke-width="0.6"/></svg>
<svg class="a" style="left:417.25757812500007px;top:2px" width="19" height="19" viewBox="0 0 19 19"><g fill="none" stroke="#1fc797" stroke-width="1.4"><path d="M5.2 3.6H13.6M4.2 5.6L8.3 14.2M14.8 5.6L10.7 14.2"/><rect x="0.9" y="1.5" width="4.2" height="4.2" rx="0.9"/><rect x="13.7" y="1.5" width="4.2" height="4.2" rx="0.9"/><rect x="7.2" y="14.2" width="4.2" height="4.2" rx="0.9"/></g></svg>
<svg class="a" style="left:551px;top:7.5px" width="17" height="12" viewBox="0 0 17 12"><path d="M0.3 6 Q8.5 -3.2 16.7 6 Q8.5 15.2 0.3 6Z" fill="#e6e6e6"/><circle cx="8.5" cy="6" r="4.2" fill="#282828"/><circle cx="8.5" cy="6" r="2" fill="#e6e6e6"/></svg>
<svg class="a" style="left:576px;top:5px" width="17" height="15" viewBox="0 0 17 15"><rect x="1" y="1" width="15" height="10.4" rx="2" fill="#1e1e1e" stroke="#ababab" stroke-width="2"/><rect x="3.2" y="3.4" width="10.6" height="5.6" fill="#e6e6e6"/><path d="M8.5 12V14.6M4.2 14.9H12.8" stroke="#e6e6e6" stroke-width="1.4"/></svg>
<svg class="a" style="left:601px;top:5px" width="17" height="16" viewBox="0 0 17 16"><path d="M0 4H4.5Q5 0.8 8 0.8H10Q13 0.8 13.5 4H17V15H0Z" fill="#555555"/><circle cx="9" cy="8.6" r="3.8" fill="#3c3c3c" stroke="#444" stroke-width="0.5"/><circle cx="9" cy="8.6" r="2.6" fill="#555555"/><circle cx="9" cy="8.6" r="1.6" fill="#3a3a3a"/></svg>
</div>
<div class="row" style="top:448px;background:#2b2b2b">
<svg class="a" style="left:133px;top:6px" width="9" height="14" viewBox="0 0 9 14"><path d="M2 1.9L7 6.9L2 11.9" stroke="#d0d0d0" stroke-width="1.4" fill="none"/></svg>
<svg class="a" style="left:150px;top:0px" width="24" height="24" viewBox="0 0 24 24"><path d="M3.6 4.9H20.6L12.1 21.6Z M7.6 7.8L12 15.4L16.4 7.8Z" fill="#c2834d" fill-rule="evenodd" stroke="#c2834d" stroke-width="0.8" stroke-linejoin="round"/></svg>
<div class="nm" style="color:#dcdcdc">test003.PKR.hand<span class="h">-</span>fk.R.000</div>
<svg class="a" style="left:394.9988125px;top:2.9px" width="18" height="18" viewBox="0 0 18 18"><circle cx="9" cy="9" r="8.6" fill="#c0606a"/><path d="M9 2.2 V9.6 Q13 9.8 15.6 7.5 A6.9 6.9 0 0 0 9 2.2Z" fill="#262626"/><path d="M9 15.8 V9.6 Q5 9.2 2.6 10.8 A6.9 6.9 0 0 0 9 15.8Z" fill="#262626"/><circle cx="9" cy="9" r="8.6" fill="none" stroke="#1e1e1e" stroke-width="0.6"/></svg>
<svg class="a" style="left:419.7988125px;top:2px" width="19" height="19" viewBox="0 0 19 19"><g fill="none" stroke="#1fc797" stroke-width="1.4"><path d="M5.2 3.6H13.6M4.2 5.6L8.3 14.2M14.8 5.6L10.7 14.2"/><rect x="0.9" y="1.5" width="4.2" height="4.2" rx="0.9"/><rect x="13.7" y="1.5" width="4.2" height="4.2" rx="0.9"/><rect x="7.2" y="14.2" width="4.2" height="4.2" rx="0.9"/></g></svg>
<svg class="a" style="left:551px;top:7.5px" width="17" height="12" viewBox="0 0 17 12"><path d="M0.3 6 Q8.5 -3.2 16.7 6 Q8.5 15.2 0.3 6Z" fill="#e6e6e6"/><circle cx="8.5" cy="6" r="4.2" fill="#282828"/><circle cx="8.5" cy="6" r="2" fill="#e6e6e6"/></svg>
<svg class="a" style="left:576px;top:5px" width="17" height="15" viewBox="0 0 17 15"><rect x="1" y="1" width="15" height="10.4" rx="2" fill="#1e1e1e" stroke="#ababab" stroke-width="2"/><rect x="3.2" y="3.4" width="10.6" height="5.6" fill="#e6e6e6"/><path d="M8.5 12V14.6M4.2 14.9H12.8" stroke="#e6e6e6" stroke-width="1.4"/></svg>
<svg class="a" style="left:601px;top:5px" width="17" height="16" viewBox="0 0 17 16"><path d="M0 4H4.5Q5 0.8 8 0.8H10Q13 0.8 13.5 4H17V15H0Z" fill="#555555"/><circle cx="9" cy="8.6" r="3.8" fill="#3c3c3c" stroke="#444" stroke-width="0.5"/><circle cx="9" cy="8.6" r="2.6" fill="#555555"/><circle cx="9" cy="8.6" r="1.6" fill="#3a3a3a"/></svg>
</div>
<div class="row" style="top:473px;background:#272727">
<svg class="a" style="left:133px;top:6px" width="9" height="14" viewBox="0 0 9 14"><path d="M2 1.9L7 6.9L2 11.9" stroke="#d0d0d0" stroke-width="1.4" fill="none"/></svg>
<svg class="a" style="left:150px;top:0px" width="24" height="24" viewBox="0 0 24 24"><path d="M3.6 4.9H20.6L12.1 21.6Z M7.6 7.8L12 15.4L16.4 7.8Z" fill="#c2834d" fill-rule="evenodd" stroke="#c2834d" stroke-width="0.8" stroke-linejoin="round"/></svg>
<div class="nm" style="color:#dcdcdc">test003.PKR.head1.000</div>
<svg class="a" style="left:366.2120937499999px;top:2.9px" width="18" height="18" viewBox="0 0 18 18"><circle cx="9" cy="9" r="8.6" fill="#c0606a"/><path d="M9 2.2 V9.6 Q13 9.8 15.6 7.5 A6.9 6.9 0 0 0 9 2.2Z" fill="#262626"/><path d="M9 15.8 V9.6 Q5 9.2 2.6 10.8 A6.9 6.9 0 0 0 9 15.8Z" fill="#262626"/><circle cx="9" cy="9" r="8.6" fill="none" stroke="#1e1e1e" stroke-width="0.6"/></svg>
<svg class="a" style="left:391.0120937499999px;top:2px" width="19" height="19" viewBox="0 0 19 19"><g fill="none" stroke="#1fc797" stroke-width="1.4"><path d="M5.2 3.6H13.6M4.2 5.6L8.3 14.2M14.8 5.6L10.7 14.2"/><rect x="0.9" y="1.5" width="4.2" height="4.2" rx="0.9"/><rect x="13.7" y="1.5" width="4.2" height="4.2" rx="0.9"/><rect x="7.2" y="14.2" width="4.2" height="4.2" rx="0.9"/></g></svg>
<svg class="a" style="left:551px;top:7.5px" width="17" height="12" viewBox="0 0 17 12"><path d="M0.3 6 Q8.5 -3.2 16.7 6 Q8.5 15.2 0.3 6Z" fill="#e6e6e6"/><circle cx="8.5" cy="6" r="4.2" fill="#282828"/><circle cx="8.5" cy="6" r="2" fill="#e6e6e6"/></svg>
<svg class="a" style="left:576px;top:5px" width="17" height="15" viewBox="0 0 17 15"><rect x="1" y="1" width="15" height="10.4" rx="2" fill="#1e1e1e" stroke="#ababab" stroke-width="2"/><rect x="3.2" y="3.4" width="10.6" height="5.6" fill="#e6e6e6"/><path d="M8.5 12V14.6M4.2 14.9H12.8" stroke="#e6e6e6" stroke-width="1.4"/></svg>
<svg class="a" style="left:601px;top:5px" width="17" height="16" viewBox="0 0 17 16"><path d="M0 4H4.5Q5 0.8 8 0.8H10Q13 0.8 13.5 4H17V15H0Z" fill="#555555"/><circle cx="9" cy="8.6" r="3.8" fill="#3c3c3c" stroke="#444" stroke-width="0.5"/><circle cx="9" cy="8.6" r="2.6" fill="#555555"/><circle cx="9" cy="8.6" r="1.6" fill="#3a3a3a"/></svg>
</div>
<div class="row" style="top:498px;background:#334d80">
<svg class="a" style="left:133px;top:6px" width="9" height="14" viewBox="0 0 9 14"><path d="M2 1.9L7 6.9L2 11.9" stroke="#d0d0d0" stroke-width="1.4" fill="none"/></svg>
<div class="a" style="left:150px;top:1.5px;width:24.599999999999994px;height:22.5px;background:rgba(255,255,255,0.2);border-radius:5px;"></div>
<svg class="a" style="left:150px;top:0px" width="24" height="24" viewBox="0 0 24 24"><path d="M3.6 4.9H20.6L12.1 21.6Z M7.6 7.8L12 15.4L16.4 7.8Z" fill="#c2834d" fill-rule="evenodd" stroke="#c2834d" stroke-width="0.8" stroke-linejoin="round"/></svg>
<div class="nm" style="color:#ffaf29">test003.PKR.head2.000</div>
<div class="a" style="left:363.2120937499999px;top:1.5px;width:24.0px;height:22.5px;background:rgba(255,255,255,0.2);border-radius:5px;"></div>
<svg class="a" style="left:366.2120937499999px;top:2.9px" width="18" height="18" viewBox="0 0 18 18"><circle cx="9" cy="9" r="8.6" fill="#c0606a"/><path d="M9 2.2 V9.6 Q13 9.8 15.6 7.5 A6.9 6.9 0 0 0 9 2.2Z" fill="#262626"/><path d="M9 15.8 V9.6 Q5 9.2 2.6 10.8 A6.9 6.9 0 0 0 9 15.8Z" fill="#262626"/><circle cx="9" cy="9" r="8.6" fill="none" stroke="#1e1e1e" stroke-width="0.6"/></svg>
<svg class="a" style="left:391.0120937499999px;top:2px" width="19" height="19" viewBox="0 0 19 19"><g fill="none" stroke="#1fc797" stroke-width="1.4"><path d="M5.2 3.6H13.6M4.2 5.6L8.3 14.2M14.8 5.6L10.7 14.2"/><rect x="0.9" y="1.5" width="4.2" height="4.2" rx="0.9"/><rect x="13.7" y="1.5" width="4.2" height="4.2" rx="0.9"/><rect x="7.2" y="14.2" width="4.2" height="4.2" rx="0.9"/></g></svg>
<svg class="a" style="left:551px;top:7.5px" width="17" height="12" viewBox="0 0 17 12"><path d="M0.3 6 Q8.5 -3.2 16.7 6 Q8.5 15.2 0.3 6Z" fill="#e6e6e6"/><circle cx="8.5" cy="6" r="4.2" fill="#282828"/><circle cx="8.5" cy="6" r="2" fill="#e6e6e6"/></svg>
<svg class="a" style="left:576px;top:5px" width="17" height="15" viewBox="0 0 17 15"><rect x="1" y="1" width="15" height="10.4" rx="2" fill="#1e1e1e" stroke="#ababab" stroke-width="2"/><rect x="3.2" y="3.4" width="10.6" height="5.6" fill="#e6e6e6"/><path d="M8.5 12V14.6M4.2 14.9H12.8" stroke="#e6e6e6" stroke-width="1.4"/></svg>
<svg class="a" style="left:601px;top:5px" width="17" height="16" viewBox="0 0 17 16"><path d="M0 4H4.5Q5 0.8 8 0.8H10Q13 0.8 13.5 4H17V15H0Z" fill="#555555"/><circle cx="9" cy="8.6" r="3.8" fill="#3c3c3c" stroke="#444" stroke-width="0.5"/><circle cx="9" cy="8.6" r="2.6" fill="#555555"/><circle cx="9" cy="8.6" r="1.6" fill="#3a3a3a"/></svg>
</div>
<div class="row" style="top:523px;background:#272727">
<svg class="a" style="left:133px;top:6px" width="9" height="14" viewBox="0 0 9 14"><path d="M2 1.9L7 6.9L2 11.9" stroke="#d0d0d0" stroke-width="1.4" fill="none"/></svg>
<svg class="a" style="left:150px;top:0px" width="24" height="24" viewBox="0 0 24 24"><path d="M3.6 4.9H20.6L12.1 21.6Z M7.6 7.8L12 15.4L16.4 7.8Z" fill="#c2834d" fill-rule="evenodd" stroke="#c2834d" stroke-width="0.8" stroke-linejoin="round"/></svg>
<div class="nm" style="color:#dcdcdc">test003.PKR.head3.000</div>
<svg class="a" style="left:366.2120937499999px;top:2.9px" width="18" height="18" viewBox="0 0 18 18"><circle cx="9" cy="9" r="8.6" fill="#c0606a"/><path d="M9 2.2 V9.6 Q13 9.8 15.6 7.5 A6.9 6.9 0 0 0 9 2.2Z" fill="#262626"/><path d="M9 15.8 V9.6 Q5 9.2 2.6 10.8 A6.9 6.9 0 0 0 9 15.8Z" fill="#262626"/><circle cx="9" cy="9" r="8.6" fill="none" stroke="#1e1e1e" stroke-width="0.6"/></svg>
<svg class="a" style="left:391.0120937499999px;top:2px" width="19" height="19" viewBox="0 0 19 19"><g fill="none" stroke="#1fc797" stroke-width="1.4"><path d="M5.2 3.6H13.6M4.2 5.6L8.3 14.2M14.8 5.6L10.7 14.2"/><rect x="0.9" y="1.5" width="4.2" height="4.2" rx="0.9"/><rect x="13.7" y="1.5" width="4.2" height="4.2" rx="0.9"/><rect x="7.2" y="14.2" width="4.2" height="4.2" rx="0.9"/></g></svg>
<svg class="a" style="left:551px;top:7.5px" width="17" height="12" viewBox="0 0 17 12"><path d="M0.3 6 Q8.5 -3.2 16.7 6 Q8.5 15.2 0.3 6Z" fill="#e6e6e6"/><circle cx="8.5" cy="6" r="4.2" fill="#282828"/><circle cx="8.5" cy="6" r="2" fill="#e6e6e6"/></svg>
<svg class="a" style="left:576px;top:5px" width="17" height="15" viewBox="0 0 17 15"><rect x="1" y="1" width="15" height="10.4" rx="2" fill="#1e1e1e" stroke="#ababab" stroke-width="2"/><rect x="3.2" y="3.4" width="10.6" height="5.6" fill="#e6e6e6"/><path d="M8.5 12V14.6M4.2 14.9H12.8" stroke="#e6e6e6" stroke-width="1.4"/></svg>
<svg class="a" style="left:601px;top:5px" width="17" height="16" viewBox="0 0 17 16"><path d="M0 4H4.5Q5 0.8 8 0.8H10Q13 0.8 13.5 4H17V15H0Z" fill="#555555"/><circle cx="9" cy="8.6" r="3.8" fill="#3c3c3c" stroke="#444" stroke-width="0.5"/><circle cx="9" cy="8.6" r="2.6" fill="#555555"/><circle cx="9" cy="8.6" r="1.6" fill="#3a3a3a"/></svg>
</div>
<div class="row" style="top:548px;background:#2b2b2b">
<svg class="a" style="left:133px;top:6px" width="9" height="14" viewBox="0 0 9 14"><path d="M2 1.9L7 6.9L2 11.9" stroke="#d0d0d0" stroke-width="1.4" fill="none"/></svg>
<svg class="a" style="left:150px;top:0px" width="24" height="24" viewBox="0 0 24 24"><path d="M3.6 4.9H20.6L12.1 21.6Z M7.6 7.8L12 15.4L16.4 7.8Z" fill="#c2834d" fill-rule="evenodd" stroke="#c2834d" stroke-width="0.8" stroke-linejoin="round"/></svg>
<div class="nm" style="color:#dcdcdc">test003.PKR.heel.L.000</div>
<svg class="a" style="left:365.10385937499996px;top:2.9px" width="18" height="18" viewBox="0 0 18 18"><circle cx="9" cy="9" r="8.6" fill="#c0606a"/><path d="M9 2.2 V9.6 Q13 9.8 15.6 7.5 A6.9 6.9 0 0 0 9 2.2Z" fill="#262626"/><path d="M9 15.8 V9.6 Q5 9.2 2.6 10.8 A6.9 6.9 0 0 0 9 15.8Z" fill="#262626"/><circle cx="9" cy="9" r="8.6" fill="none" stroke="#1e1e1e" stroke-width="0.6"/></svg>
<svg class="a" style="left:389.90385937499997px;top:2px" width="19" height="19" viewBox="0 0 19 19"><g fill="none" stroke="#1fc797" stroke-width="1.4"><path d="M5.2 3.6H13.6M4.2 5.6L8.3 14.2M14.8 5.6L10.7 14.2"/><rect x="0.9" y="1.5" width="4.2" height="4.2" rx="0.9"/><rect x="13.7" y="1.5" width="4.2" height="4.2" rx="0.9"/><rect x="7.2" y="14.2" width="4.2" height="4.2" rx="0.9"/></g></svg>
<svg class="a" style="left:551px;top:7.5px" width="17" height="12" viewBox="0 0 17 12"><path d="M0.3 6 Q8.5 -3.2 16.7 6 Q8.5 15.2 0.3 6Z" fill="#e6e6e6"/><circle cx="8.5" cy="6" r="4.2" fill="#282828"/><circle cx="8.5" cy="6" r="2" fill="#e6e6e6"/></svg>
<svg class="a" style="left:576px;top:5px" width="17" height="15" viewBox="0 0 17 15"><rect x="1" y="1" width="15" height="10.4" rx="2" fill="#1e1e1e" stroke="#ababab" stroke-width="2"/><rect x="3.2" y="3.4" width="10.6" height="5.6" fill="#e6e6e6"/><path d="M8.5 12V14.6M4.2 14.9H12.8" stroke="#e6e6e6" stroke-width="1.4"/></svg>
<svg class="a" style="left:601px;top:5px" width="17" height="16" viewBox="0 0 17 16"><path d="M0 4H4.5Q5 0.8 8 0.8H10Q13 0.8 13.5 4H17V15H0Z" fill="#555555"/><circle cx="9" cy="8.6" r="3.8" fill="#3c3c3c" stroke="#444" stroke-width="0.5"/><circle cx="9" cy="8.6" r="2.6" fill="#555555"/><circle cx="9" cy="8.6" r="1.6" fill="#3a3a3a"/></svg>
</div>
<div class="row" style="top:573px;background:#272727">
<svg class="a" style="left:133px;top:6px" width="9" height="14" viewBox="0 0 9 14"><path d="M2 1.9L7 6.9L2 11.9" stroke="#d0d0d0" stroke-width="1.4" fill="none"/></svg>
<svg class="a" style="left:150px;top:0px" width="24" height="24" viewBox="0 0 24 24"><path d="M3.6 4.9H20.6L12.1 21.6Z M7.6 7.8L12 15.4L16.4 7.8Z" fill="#c2834d" fill-rule="evenodd" stroke="#c2834d" stroke-width="0.8" stroke-linejoin="round"/></svg>
<div class="nm" style="color:#dcdcdc">test003.PKR.heel.R.000</div>
<svg class="a" style="left:367.6450937499999px;top:2.9px" width="18" height="18" viewBox="0 0 18 18"><circle cx="9" cy="9" r="8.6" fill="#c0606a"/><path d="M9 2.2 V9.6 Q13 9.8 15.6 7.5 A6.9 6.9 0 0 0 9 2.2Z" fill="#262626"/><path d="M9 15.8 V9.6 Q5 9.2 2.6 10.8 A6.9 6.9 0 0 0 9 15.8Z" fill="#262626"/><circle cx="9" cy="9" r="8.6" fill="none" stroke="#1e1e1e" stroke-width="0.6"/></svg>
<svg class="a" style="left:392.4450937499999px;top:2px" width="19" height="19" viewBox="0 0 19 19"><g fill="none" stroke="#1fc797" stroke-width="1.4"><path d="M5.2 3.6H13.6M4.2 5.6L8.3 14.2M14.8 5.6L10.7 14.2"/><rect x="0.9" y="1.5" width="4.2" height="4.2" rx="0.9"/><rect x="13.7" y="1.5" width="4.2" height="4.2" rx="0.9"/><rect x="7.2" y="14.2" width="4.2" height="4.2" rx="0.9"/></g></svg>
<svg class="a" style="left:551px;top:7.5px" width="17" height="12" viewBox="0 0 17 12"><path d="M0.3 6 Q8.5 -3.2 16.7 6 Q8.5 15.2 0.3 6Z" fill="#e6e6e6"/><circle cx="8.5" cy="6" r="4.2" fill="#282828"/><circle cx="8.5" cy="6" r="2" fill="#e6e6e6"/></svg>
<svg class="a" style="left:576px;top:5px" width="17" height="15" viewBox="0 0 17 15"><rect x="1" y="1" width="15" height="10.4" rx="2" fill="#1e1e1e" stroke="#ababab" stroke-width="2"/><rect x="3.2" y="3.4" width="10.6" height="5.6" fill="#e6e6e6"/><path d="M8.5 12V14.6M4.2 14.9H12.8" stroke="#e6e6e6" stroke-width="1.4"/></svg>
<svg class="a" style="left:601px;top:5px" width="17" height="16" viewBox="0 0 17 16"><path d="M0 4H4.5Q5 0.8 8 0.8H10Q13 0.8 13.5 4H17V15H0Z" fill="#555555"/><circle cx="9" cy="8.6" r="3.8" fill="#3c3c3c" stroke="#444" stroke-width="0.5"/><circle cx="9" cy="8.6" r="2.6" fill="#555555"/><circle cx="9" cy="8.6" r="1.6" fill="#3a3a3a"/></svg>
</div>
<div class="row" style="top:598px;background:#2b2b2b">
<svg class="a" style="left:133px;top:6px" width="9" height="14" viewBox="0 0 9 14"><path d="M2 1.9L7 6.9L2 11.9" stroke="#d0d0d0" stroke-width="1.4" fill="none"/></svg>
<svg class="a" style="left:150px;top:0px" width="24" height="24" viewBox="0 0 24 24"><path d="M3.6 4.9H20.6L12.1 21.6Z M7.6 7.8L12 15.4L16.4 7.8Z" fill="#c2834d" fill-rule="evenodd" stroke="#c2834d" stroke-width="0.8" stroke-linejoin="round"/></svg>
<div class="nm" style="color:#dcdcdc">test003.PKR.hip<span class="h">-</span>all.L.000</div>
<svg class="a" style="left:382.24721875px;top:2.9px" width="18" height="18" viewBox="0 0 18 18"><circle cx="9" cy="9" r="8.6" fill="#c0606a"/><path d="M9 2.2 V9.6 Q13 9.8 15.6 7.5 A6.9 6.9 0 0 0 9 2.2Z" fill="#262626"/><path d="M9 15.8 V9.6 Q5 9.2 2.6 10.8 A6.9 6.9 0 0 0 9 15.8Z" fill="#262626"/><circle cx="9" cy="9" r="8.6" fill="none" stroke="#1e1e1e" stroke-width="0.6"/></svg>
<svg class="a" style="left:407.04721875px;top:2px" width="19" height="19" viewBox="0 0 19 19"><g fill="none" stroke="#1fc797" stroke-width="1.4"><path d="M5.2 3.6H13.6M4.2 5.6L8.3 14.2M14.8 5.6L10.7 14.2"/><rect x="0.9" y="1.5" width="4.2" height="4.2" rx="0.9"/><rect x="13.7" y="1.5" width="4.2" height="4.2" rx="0.9"/><rect x="7.2" y="14.2" width="4.2" height="4.2" rx="0.9"/></g></svg>
<svg class="a" style="left:551px;top:7.5px" width="17" height="12" viewBox="0 0 17 12"><path d="M0.3 6 Q8.5 -3.2 16.7 6 Q8.5 15.2 0.3 6Z" fill="#e6e6e6"/><circle cx="8.5" cy="6" r="4.2" fill="#282828"/><circle cx="8.5" cy="6" r="2" fill="#e6e6e6"/></svg>
<svg class="a" style="left:576px;top:5px" width="17" height="15" viewBox="0 0 17 15"><rect x="1" y="1" width="15" height="10.4" rx="2" fill="#1e1e1e" stroke="#ababab" stroke-width="2"/><rect x="3.2" y="3.4" width="10.6" height="5.6" fill="#e6e6e6"/><path d="M8.5 12V14.6M4.2 14.9H12.8" stroke="#e6e6e6" stroke-width="1.4"/></svg>
<svg class="a" style="left:601px;top:5px" width="17" height="16" viewBox="0 0 17 16"><path d="M0 4H4.5Q5 0.8 8 0.8H10Q13 0.8 13.5 4H17V15H0Z" fill="#555555"/><circle cx="9" cy="8.6" r="3.8" fill="#3c3c3c" stroke="#444" stroke-width="0.5"/><circle cx="9" cy="8.6" r="2.6" fill="#555555"/><circle cx="9" cy="8.6" r="1.6" fill="#3a3a3a"/></svg>
</div>
<div class="row" style="top:623px;background:#272727">
<svg class="a" style="left:133px;top:6px" width="9" height="14" viewBox="0 0 9 14"><path d="M2 1.9L7 6.9L2 11.9" stroke="#d0d0d0" stroke-width="1.4" fill="none"/></svg>
<svg class="a" style="left:150px;top:0px" width="24" height="24" viewBox="0 0 24 24"><path d="M3.6 4.9H20.6L12.1 21.6Z M7.6 7.8L12 15.4L16.4 7.8Z" fill="#c2834d" fill-rule="evenodd" stroke="#c2834d" stroke-width="0.8" stroke-linejoin="round"/></svg>
<div class="nm" style="color:#dcdcdc">test003.PKR.hip<span class="h">-</span>all.R.000</div>
<svg class="a" style="left:384.78845312499993px;top:2.9px" width="18" height="18" viewBox="0 0 18 18"><circle cx="9" cy="9" r="8.6" fill="#c0606a"/><path d="M9 2.2 V9.6 Q13 9.8 15.6 7.5 A6.9 6.9 0 0 0 9 2.2Z" fill="#262626"/><path d="M9 15.8 V9.6 Q5 9.2 2.6 10.8 A6.9 6.9 0 0 0 9 15.8Z" fill="#262626"/><circle cx="9" cy="9" r="8.6" fill="none" stroke="#1e1e1e" stroke-width="0.6"/></svg>
<svg class="a" style="left:409.58845312499994px;top:2px" width="19" height="19" viewBox="0 0 19 19"><g fill="none" stroke="#1fc797" stroke-width="1.4"><path d="M5.2 3.6H13.6M4.2 5.6L8.3 14.2M14.8 5.6L10.7 14.2"/><rect x="0.9" y="1.5" width="4.2" height="4.2" rx="0.9"/><rect x="13.7" y="1.5" width="4.2" height="4.2" rx="0.9"/><rect x="7.2" y="14.2" width="4.2" height="4.2" rx="0.9"/></g></svg>
<svg class="a" style="left:551px;top:7.5px" width="17" height="12" viewBox="0 0 17 12"><path d="M0.3 6 Q8.5 -3.2 16.7 6 Q8.5 15.2 0.3 6Z" fill="#e6e6e6"/><circle cx="8.5" cy="6" r="4.2" fill="#282828"/><circle cx="8.5" cy="6" r="2" fill="#e6e6e6"/></svg>
<svg class="a" style="left:576px;top:5px" width="17" height="15" viewBox="0 0 17 15"><rect x="1" y="1" width="15" height="10.4" rx="2" fill="#1e1e1e" stroke="#ababab" stroke-width="2"/><rect x="3.2" y="3.4" width="10.6" height="5.6" fill="#e6e6e6"/><path d="M8.5 12V14.6M4.2 14.9H12.8" stroke="#e6e6e6" stroke-width="1.4"/></svg>
<svg class="a" style="left:601px;top:5px" width="17" height="16" viewBox="0 0 17 16"><path d="M0 4H4.5Q5 0.8 8 0.8H10Q13 0.8 13.5 4H17V15H0Z" fill="#555555"/><circle cx="9" cy="8.6" r="3.8" fill="#3c3c3c" stroke="#444" stroke-width="0.5"/><circle cx="9" cy="8.6" r="2.6" fill="#555555"/><circle cx="9" cy="8.6" r="1.6" fill="#3a3a3a"/></svg>
</div>
<div class="row" style="top:648px;background:#2b2b2b">
<svg class="a" style="left:133px;top:6px" width="9" height="14" viewBox="0 0 9 14"><path d="M2 1.9L7 6.9L2 11.9" stroke="#d0d0d0" stroke-width="1.4" fill="none"/></svg>
<svg class="a" style="left:150px;top:0px" width="24" height="24" viewBox="0 0 24 24"><path d="M3.6 4.9H20.6L12.1 21.6Z M7.6 7.8L12 15.4L16.4 7.8Z" fill="#c2834d" fill-rule="evenodd" stroke="#c2834d" stroke-width="0.8" stroke-linejoin="round"/></svg>
<div class="nm" style="color:#dcdcdc">test003.PKR.hip<span class="h">-</span>tweak.L.000</div>
<svg class="a" style="left:406.4065156249999px;top:2.9px" width="18" height="18" viewBox="0 0 18 18"><circle cx="9" cy="9" r="8.6" fill="#c0606a"/><path d="M9 2.2 V9.6 Q13 9.8 15.6 7.5 A6.9 6.9 0 0 0 9 2.2Z" fill="#262626"/><path d="M9 15.8 V9.6 Q5 9.2 2.6 10.8 A6.9 6.9 0 0 0 9 15.8Z" fill="#262626"/><circle cx="9" cy="9" r="8.6" fill="none" stroke="#1e1e1e" stroke-width="0.6"/></svg>
<svg class="a" style="left:431.2065156249999px;top:2px" width="19" height="19" viewBox="0 0 19 19"><g fill="none" stroke="#1fc797" stroke-width="1.4"><path d="M5.2 3.6H13.6M4.2 5.6L8.3 14.2M14.8 5.6L10.7 14.2"/><rect x="0.9" y="1.5" width="4.2" height="4.2" rx="0.9"/><rect x="13.7" y="1.5" width="4.2" height="4.2" rx="0.9"/><rect x="7.2" y="14.2" width="4.2" height="4.2" rx="0.9"/></g></svg>
<svg class="a" style="left:551px;top:7.5px" width="17" height="12" viewBox="0 0 17 12"><path d="M0.3 6 Q8.5 -3.2 16.7 6 Q8.5 15.2 0.3 6Z" fill="#e6e6e6"/><circle cx="8.5" cy="6" r="4.2" fill="#282828"/><circle cx="8.5" cy="6" r="2" fill="#e6e6e6"/></svg>
<svg class="a" style="left:576px;top:5px" width="17" height="15" viewBox="0 0 17 15"><rect x="1" y="1" width="15" height="10.4" rx="2" fill="#1e1e1e" stroke="#ababab" stroke-width="2"/><rect x="3.2" y="3.4" width="10.6" height="5.6" fill="#e6e6e6"/><path d="M8.5 12V14.6M4.2 14.9H12.8" stroke="#e6e6e6" stroke-width="1.4"/></svg>
<svg class="a" style="left:601px;top:5px" width="17" height="16" viewBox="0 0 17 16"><path d="M0 4H4.5Q5 0.8 8 0.8H10Q13 0.8 13.5 4H17V15H0Z" fill="#555555"/><circle cx="9" cy="8.6" r="3.8" fill="#3c3c3c" stroke="#444" stroke-width="0.5"/><circle cx="9" cy="8.6" r="2.6" fill="#555555"/><circle cx="9" cy="8.6" r="1.6" fill="#3a3a3a"/></svg>
</div>
<div class="row" style="top:673px;background:#272727">
<svg class="a" style="left:133px;top:6px" width="9" height="14" viewBox="0 0 9 14"><path d="M2 1.9L7 6.9L2 11.9" stroke="#d0d0d0" stroke-width="1.4" fill="none"/></svg>
<svg class="a" style="left:150px;top:0px" width="24" height="24" viewBox="0 0 24 24"><path d="M3.6 4.9H20.6L12.1 21.6Z M7.6 7.8L12 15.4L16.4 7.8Z" fill="#c2834d" fill-rule="evenodd" stroke="#c2834d" stroke-width="0.8" stroke-linejoin="round"/></svg>
<div class="nm" style="color:#dcdcdc">test003.PKR.hip<span class="h">-</span>tweak.R.000</div>
<svg class="a" style="left:408.94775000000004px;top:2.9px" width="18" height="18" viewBox="0 0 18 18"><circle cx="9" cy="9" r="8.6" fill="#c0606a"/><path d="M9 2.2 V9.6 Q13 9.8 15.6 7.5 A6.9 6.9 0 0 0 9 2.2Z" fill="#262626"/><path d="M9 15.8 V9.6 Q5 9.2 2.6 10.8 A6.9 6.9 0 0 0 9 15.8Z" fill="#262626"/><circle cx="9" cy="9" r="8.6" fill="none" stroke="#1e1e1e" stroke-width="0.6"/></svg>
<svg class="a" style="left:433.74775000000005px;top:2px" width="19" height="19" viewBox="0 0 19 19"><g fill="none" stroke="#1fc797" stroke-width="1.4"><path d="M5.2 3.6H13.6M4.2 5.6L8.3 14.2M14.8 5.6L10.7 14.2"/><rect x="0.9" y="1.5" width="4.2" height="4.2" rx="0.9"/><rect x="13.7" y="1.5" width="4.2" height="4.2" rx="0.9"/><rect x="7.2" y="14.2" width="4.2" height="4.2" rx="0.9"/></g></svg>
<svg class="a" style="left:551px;top:7.5px" width="17" height="12" viewBox="0 0 17 12"><path d="M0.3 6 Q8.5 -3.2 16.7 6 Q8.5 15.2 0.3 6Z" fill="#e6e6e6"/><circle cx="8.5" cy="6" r="4.2" fill="#282828"/><circle cx="8.5" cy="6" r="2" fill="#e6e6e6"/></svg>
<svg class="a" style="left:576px;top:5px" width="17" height="15" viewBox="0 0 17 15"><rect x="1" y="1" width="15" height="10.4" rx="2" fill="#1e1e1e" stroke="#ababab" stroke-width="2"/><rect x="3.2" y="3.4" width="10.6" height="5.6" fill="#e6e6e6"/><path d="M8.5 12V14.6M4.2 14.9H12.8" stroke="#e6e6e6" stroke-width="1.4"/></svg>
<svg class="a" style="left:601px;top:5px" width="17" height="16" viewBox="0 0 17 16"><path d="M0 4H4.5Q5 0.8 8 0.8H10Q13 0.8 13.5 4H17V15H0Z" fill="#555555"/><circle cx="9" cy="8.6" r="3.8" fill="#3c3c3c" stroke="#444" stroke-width="0.5"/><circle cx="9" cy="8.6" r="2.6" fill="#555555"/><circle cx="9" cy="8.6" r="1.6" fill="#3a3a3a"/></svg>
</div>
<div class="row" style="top:698px;background:#2b2b2b">
<svg class="a" style="left:133px;top:6px" width="9" height="14" viewBox="0 0 9 14"><path d="M2 1.9L7 6.9L2 11.9" stroke="#d0d0d0" stroke-width="1.4" fill="none"/></svg>
<svg class="a" style="left:150px;top:0px" width="24" height="24" viewBox="0 0 24 24"><path d="M3.6 4.9H20.6L12.1 21.6Z M7.6 7.8L12 15.4L16.4 7.8Z" fill="#c2834d" fill-rule="evenodd" stroke="#c2834d" stroke-width="0.8" stroke-linejoin="round"/></svg>
<div class="nm" style="color:#dcdcdc">test003.PKR.hip<span class="h">-</span>tweak<span class="h">-</span>all.L.000</div>
<svg class="a" style="left:431.80810937499996px;top:2.9px" width="18" height="18" viewBox="0 0 18 18"><circle cx="9" cy="9" r="8.6" fill="#c0606a"/><path d="M9 2.2 V9.6 Q13 9.8 15.6 7.5 A6.9 6.9 0 0 0 9 2.2Z" fill="#262626"/><path d="M9 15.8 V9.6 Q5 9.2 2.6 10.8 A6.9 6.9 0 0 0 9 15.8Z" fill="#262626"/><circle cx="9" cy="9" r="8.6" fill="none" stroke="#1e1e1e" stroke-width="0.6"/></svg>
<svg class="a" style="left:456.60810937499997px;top:2px" width="19" height="19" viewBox="0 0 19 19"><g fill="none" stroke="#1fc797" stroke-width="1.4"><path d="M5.2 3.6H13.6M4.2 5.6L8.3 14.2M14.8 5.6L10.7 14.2"/><rect x="0.9" y="1.5" width="4.2" height="4.2" rx="0.9"/><rect x="13.7" y="1.5" width="4.2" height="4.2" rx="0.9"/><rect x="7.2" y="14.2" width="4.2" height="4.2" rx="0.9"/></g></svg>
<svg class="a" style="left:551px;top:7.5px" width="17" height="12" viewBox="0 0 17 12"><path d="M0.3 6 Q8.5 -3.2 16.7 6 Q8.5 15.2 0.3 6Z" fill="#e6e6e6"/><circle cx="8.5" cy="6" r="4.2" fill="#282828"/><circle cx="8.5" cy="6" r="2" fill="#e6e6e6"/></svg>
<svg class="a" style="left:576px;top:5px" width="17" height="15" viewBox="0 0 17 15"><rect x="1" y="1" width="15" height="10.4" rx="2" fill="#1e1e1e" stroke="#ababab" stroke-width="2"/><rect x="3.2" y="3.4" width="10.6" height="5.6" fill="#e6e6e6"/><path d="M8.5 12V14.6M4.2 14.9H12.8" stroke="#e6e6e6" stroke-width="1.4"/></svg>
<svg class="a" style="left:601px;top:5px" width="17" height="16" viewBox="0 0 17 16"><path d="M0 4H4.5Q5 0.8 8 0.8H10Q13 0.8 13.5 4H17V15H0Z" fill="#555555"/><circle cx="9" cy="8.6" r="3.8" fill="#3c3c3c" stroke="#444" stroke-width="0.5"/><circle cx="9" cy="8.6" r="2.6" fill="#555555"/><circle cx="9" cy="8.6" r="1.6" fill="#3a3a3a"/></svg>
</div>
<div class="row" style="top:723px;background:#272727">
<svg class="a" style="left:133px;top:6px" width="9" height="14" viewBox="0 0 9 14"><path d="M2 1.9L7 6.9L2 11.9" stroke="#d0d0d0" stroke-width="1.4" fill="none"/></svg>
<svg class="a" style="left:150px;top:0px" width="24" height="24" viewBox="0 0 24 24"><path d="M3.6 4.9H20.6L12.1 21.6Z M7.6 7.8L12 15.4L16.4 7.8Z" fill="#c2834d" fill-rule="evenodd" stroke="#c2834d" stroke-width="0.8" stroke-linejoin="round"/></svg>
<div class="nm" style="color:#dcdcdc">test003.PKR.hip<span class="h">-</span>tweak<span class="h">-</span>all.R.000</div>
<svg class="a" style="left:434.3493437500001px;top:2.9px" width="18" height="18" viewBox="0 0 18 18"><circle cx="9" cy="9" r="8.6" fill="#c0606a"/><path d="M9 2.2 V9.6 Q13 9.8 15.6 7.5 A6.9 6.9 0 0 0 9 2.2Z" fill="#262626"/><path d="M9 15.8 V9.6 Q5 9.2 2.6 10.8 A6.9 6.9 0 0 0 9 15.8Z" fill="#262626"/><circle cx="9" cy="9" r="8.6" fill="none" stroke="#1e1e1e" stroke-width="0.6"/></svg>
<svg class="a" style="left:459.1493437500001px;top:2px" width="19" height="19" viewBox="0 0 19 19"><g fill="none" stroke="#1fc797" stroke-width="1.4"><path d="M5.2 3.6H13.6M4.2 5.6L8.3 14.2M14.8 5.6L10.7 14.2"/><rect x="0.9" y="1.5" width="4.2" height="4.2" rx="0.9"/><rect x="13.7" y="1.5" width="4.2" height="4.2" rx="0.9"/><rect x="7.2" y="14.2" width="4.2" height="4.2" rx="0.9"/></g></svg>
<svg class="a" style="left:551px;top:7.5px" width="17" height="12" viewBox="0 0 17 12"><path d="M0.3 6 Q8.5 -3.2 16.7 6 Q8.5 15.2 0.3 6Z" fill="#e6e6e6"/><circle cx="8.5" cy="6" r="4.2" fill="#282828"/><circle cx="8.5" cy="6" r="2" fill="#e6e6e6"/></svg>
<svg class="a" style="left:576px;top:5px" width="17" height="15" viewBox="0 0 17 15"><rect x="1" y="1" width="15" height="10.4" rx="2" fill="#1e1e1e" stroke="#ababab" stroke-width="2"/><rect x="3.2" y="3.4" width="10.6" height="5.6" fill="#e6e6e6"/><path d="M8.5 12V14.6M4.2 14.9H12.8" stroke="#e6e6e6" stroke-width="1.4"/></svg>
<svg class="a" style="left:601px;top:5px" width="17" height="16" viewBox="0 0 17 16"><path d="M0 4H4.5Q5 0.8 8 0.8H10Q13 0.8 13.5 4H17V15H0Z" fill="#555555"/><circle cx="9" cy="8.6" r="3.8" fill="#3c3c3c" stroke="#444" stroke-width="0.5"/><circle cx="9" cy="8.6" r="2.6" fill="#555555"/><circle cx="9" cy="8.6" r="1.6" fill="#3a3a3a"/></svg>
</div>
<div class="row" style="top:748px;background:#2b2b2b">
<svg class="a" style="left:133px;top:6px" width="9" height="14" viewBox="0 0 9 14"><path d="M2 1.9L7 6.9L2 11.9" stroke="#d0d0d0" stroke-width="1.4" fill="none"/></svg>
<svg class="a" style="left:150px;top:0px" width="24" height="24" viewBox="0 0 24 24"><path d="M3.6 4.9H20.6L12.1 21.6Z M7.6 7.8L12 15.4L16.4 7.8Z" fill="#c2834d" fill-rule="evenodd" stroke="#c2834d" stroke-width="0.8" stroke-linejoin="round"/></svg>
<div class="nm" style="color:#dcdcdc">test003.PKR.knee.L.000</div>
<svg class="a" style="left:369.35439062499995px;top:2.9px" width="18" height="18" viewBox="0 0 18 18"><circle cx="9" cy="9" r="8.6" fill="#c0606a"/><path d="M9 2.2 V9.6 Q13 9.8 15.6 7.5 A6.9 6.9 0 0 0 9 2.2Z" fill="#262626"/><path d="M9 15.8 V9.6 Q5 9.2 2.6 10.8 A6.9 6.9 0 0 0 9 15.8Z" fill="#262626"/><circle cx="9" cy="9" r="8.6" fill="none" stroke="#1e1e1e" stroke-width="0.6"/></svg>
<svg class="a" style="left:394.15439062499996px;top:2px" width="19" height="19" viewBox="0 0 19 19"><g fill="none" stroke="#1fc797" stroke-width="1.4"><path d="M5.2 3.6H13.6M4.2 5.6L8.3 14.2M14.8 5.6L10.7 14.2"/><rect x="0.9" y="1.5" width="4.2" height="4.2" rx="0.9"/><rect x="13.7" y="1.5" width="4.2" height="4.2" rx="0.9"/><rect x="7.2" y="14.2" width="4.2" height="4.2" rx="0.9"/></g></svg>
<svg class="a" style="left:551px;top:7.5px" width="17" height="12" viewBox="0 0 17 12"><path d="M0.3 6 Q8.5 -3.2 16.7 6 Q8.5 15.2 0.3 6Z" fill="#e6e6e6"/><circle cx="8.5" cy="6" r="4.2" fill="#282828"/><circle cx="8.5" cy="6" r="2" fill="#e6e6e6"/></svg>
<svg class="a" style="left:576px;top:5px" width="17" height="15" viewBox="0 0 17 15"><rect x="1" y="1" width="15" height="10.4" rx="2" fill="#1e1e1e" stroke="#ababab" stroke-width="2"/><rect x="3.2" y="3.4" width="10.6" height="5.6" fill="#e6e6e6"/><path d="M8.5 12V14.6M4.2 14.9H12.8" stroke="#e6e6e6" stroke-width="1.4"/></svg>
<svg class="a" style="left:601px;top:5px" width="17" height="16" viewBox="0 0 17 16"><path d="M0 4H4.5Q5 0.8 8 0.8H10Q13 0.8 13.5 4H17V15H0Z" fill="#555555"/><circle cx="9" cy="8.6" r="3.8" fill="#3c3c3c" stroke="#444" stroke-width="0.5"/><circle cx="9" cy="8.6" r="2.6" fill="#555555"/><circle cx="9" cy="8.6" r="1.6" fill="#3a3a3a"/></svg>
</div>
<div class="row" style="top:773px;background:#272727">
<svg class="a" style="left:133px;top:6px" width="9" height="14" viewBox="0 0 9 14"><path d="M2 1.9L7 6.9L2 11.9" stroke="#d0d0d0" stroke-width="1.4" fill="none"/></svg>
<svg class="a" style="left:150px;top:0px" width="24" height="24" viewBox="0 0 24 24"><path d="M3.6 4.9H20.6L12.1 21.6Z M7.6 7.8L12 15.4L16.4 7.8Z" fill="#c2834d" fill-rule="evenodd" stroke="#c2834d" stroke-width="0.8" stroke-linejoin="round"/></svg>
<div class="nm" style="color:#dcdcdc">test003.PKR.knee.R.000</div>
<svg class="a" style="left:371.8956250000001px;top:2.9px" width="18" height="18" viewBox="0 0 18 18"><circle cx="9" cy="9" r="8.6" fill="#c0606a"/><path d="M9 2.2 V9.6 Q13 9.8 15.6 7.5 A6.9 6.9 0 0 0 9 2.2Z" fill="#262626"/><path d="M9 15.8 V9.6 Q5 9.2 2.6 10.8 A6.9 6.9 0 0 0 9 15.8Z" fill="#262626"/><circle cx="9" cy="9" r="8.6" fill="none" stroke="#1e1e1e" stroke-width="0.6"/></svg>
<svg class="a" style="left:396.6956250000001px;top:2px" width="19" height="19" viewBox="0 0 19 19"><g fill="none" stroke="#1fc797" stroke-width="1.4"><path d="M5.2 3.6H13.6M4.2 5.6L8.3 14.2M14.8 5.6L10.7 14.2"/><rect x="0.9" y="1.5" width="4.2" height="4.2" rx="0.9"/><rect x="13.7" y="1.5" width="4.2" height="4.2" rx="0.9"/><rect x="7.2" y="14.2" width="4.2" height="4.2" rx="0.9"/></g></svg>
<svg class="a" style="left:551px;top:7.5px" width="17" height="12" viewBox="0 0 17 12"><path d="M0.3 6 Q8.5 -3.2 16.7 6 Q8.5 15.2 0.3 6Z" fill="#e6e6e6"/><circle cx="8.5" cy="6" r="4.2" fill="#282828"/><circle cx="8.5" cy="6" r="2" fill="#e6e6e6"/></svg>
<svg class="a" style="left:576px;top:5px" width="17" height="15" viewBox="0 0 17 15"><rect x="1" y="1" width="15" height="10.4" rx="2" fill="#1e1e1e" stroke="#ababab" stroke-width="2"/><rect x="3.2" y="3.4" width="10.6" height="5.6" fill="#e6e6e6"/><path d="M8.5 12V14.6M4.2 14.9H12.8" stroke="#e6e6e6" stroke-width="1.4"/></svg>
<svg class="a" style="left:601px;top:5px" width="17" height="16" viewBox="0 0 17 16"><path d="M0 4H4.5Q5 0.8 8 0.8H10Q13 0.8 13.5 4H17V15H0Z" fill="#555555"/><circle cx="9" cy="8.6" r="3.8" fill="#3c3c3c" stroke="#444" stroke-width="0.5"/><circle cx="9" cy="8.6" r="2.6" fill="#555555"/><circle cx="9" cy="8.6" r="1.6" fill="#3a3a3a"/></svg>
</div>
<div class="row" style="top:798px;background:#2b2b2b">
<svg class="a" style="left:133px;top:6px" width="9" height="14" viewBox="0 0 9 14"><path d="M2 1.9L7 6.9L2 11.9" stroke="#d0d0d0" stroke-width="1.4" fill="none"/></svg>
<svg class="a" style="left:150px;top:0px" width="24" height="24" viewBox="0 0 24 24"><path d="M3.6 4.9H20.6L12.1 21.6Z M7.6 7.8L12 15.4L16.4 7.8Z" fill="#c2834d" fill-rule="evenodd" stroke="#c2834d" stroke-width="0.8" stroke-linejoin="round"/></svg>
<div class="nm" style="color:#dcdcdc">test003.PKR.knee<span class="h">-</span>target.L.000</div>
<svg class="a" style="left:417.81899999999996px;top:2.9px" width="18" height="18" viewBox="0 0 18 18"><circle cx="9" cy="9" r="8.6" fill="#c0606a"/><path d="M9 2.2 V9.6 Q13 9.8 15.6 7.5 A6.9 6.9 0 0 0 9 2.2Z" fill="#262626"/><path d="M9 15.8 V9.6 Q5 9.2 2.6 10.8 A6.9 6.9 0 0 0 9 15.8Z" fill="#262626"/><circle cx="9" cy="9" r="8.6" fill="none" stroke="#1e1e1e" stroke-width="0.6"/></svg>
<svg class="a" style="left:442.61899999999997px;top:2px" width="19" height="19" viewBox="0 0 19 19"><g fill="none" stroke="#1fc797" stroke-width="1.4"><path d="M5.2 3.6H13.6M4.2 5.6L8.3 14.2M14.8 5.6L10.7 14.2"/><rect x="0.9" y="1.5" width="4.2" height="4.2" rx="0.9"/><rect x="13.7" y="1.5" width="4.2" height="4.2" rx="0.9"/><rect x="7.2" y="14.2" width="4.2" height="4.2" rx="0.9"/></g></svg>
<svg class="a" style="left:551px;top:7.5px" width="17" height="12" viewBox="0 0 17 12"><path d="M0.3 6 Q8.5 -3.2 16.7 6 Q8.5 15.2 0.3 6Z" fill="#e6e6e6"/><circle cx="8.5" cy="6" r="4.2" fill="#282828"/><circle cx="8.5" cy="6" r="2" fill="#e6e6e6"/></svg>
<svg class="a" style="left:576px;top:5px" width="17" height="15" viewBox="0 0 17 15"><rect x="1" y="1" width="15" height="10.4" rx="2" fill="#1e1e1e" stroke="#ababab" stroke-width="2"/><rect x="3.2" y="3.4" width="10.6" height="5.6" fill="#e6e6e6"/><path d="M8.5 12V14.6M4.2 14.9H12.8" stroke="#e6e6e6" stroke-width="1.4"/></svg>
<svg class="a" style="left:601px;top:5px" width="17" height="16" viewBox="0 0 17 16"><path d="M0 4H4.5Q5 0.8 8 0.8H10Q13 0.8 13.5 4H17V15H0Z" fill="#555555"/><circle cx="9" cy="8.6" r="3.8" fill="#3c3c3c" stroke="#444" stroke-width="0.5"/><circle cx="9" cy="8.6" r="2.6" fill="#555555"/><circle cx="9" cy="8.6" r="1.6" fill="#3a3a3a"/></svg>
</div>
<div class="row" style="top:823px;background:#272727">
<svg class="a" style="left:133px;top:6px" width="9" height="14" viewBox="0 0 9 14"><path d="M2 1.9L7 6.9L2 11.9" stroke="#d0d0d0" stroke-width="1.4" fill="none"/></svg>
<svg class="a" style="left:150px;top:0px" width="24" height="24" viewBox="0 0 24 24"><path d="M3.6 4.9H20.6L12.1 21.6Z M7.6 7.8L12 15.4L16.4 7.8Z" fill="#c2834d" fill-rule="evenodd" stroke="#c2834d" stroke-width="0.8" stroke-linejoin="round"/></svg>
<div class="nm" style="color:#dcdcdc">test003.PKR.knee<span class="h">-</span>target.R.000</div>
<svg class="a" style="left:420.3602343749999px;top:2.9px" width="18" height="18" viewBox="0 0 18 18"><circle cx="9" cy="9" r="8.6" fill="#c0606a"/><path d="M9 2.2 V9.6 Q13 9.8 15.6 7.5 A6.9 6.9 0 0 0 9 2.2Z" fill="#262626"/><path d="M9 15.8 V9.6 Q5 9.2 2.6 10.8 A6.9 6.9 0 0 0 9 15.8Z" fill="#262626"/><circle cx="9" cy="9" r="8.6" fill="none" stroke="#1e1e1e" stroke-width="0.6"/></svg>
<svg class="a" style="left:445.1602343749999px;top:2px" width="19" height="19" viewBox="0 0 19 19"><g fill="none" stroke="#1fc797" stroke-width="1.4"><path d="M5.2 3.6H13.6M4.2 5.6L8.3 14.2M14.8 5.6L10.7 14.2"/><rect x="0.9" y="1.5" width="4.2" height="4.2" rx="0.9"/><rect x="13.7" y="1.5" width="4.2" height="4.2" rx="0.9"/><rect x="7.2" y="14.2" width="4.2" height="4.2" rx="0.9"/></g></svg>
<svg class="a" style="left:551px;top:7.5px" width="17" height="12" viewBox="0 0 17 12"><path d="M0.3 6 Q8.5 -3.2 16.7 6 Q8.5 15.2 0.3 6Z" fill="#e6e6e6"/><circle cx="8.5" cy="6" r="4.2" fill="#282828"/><circle cx="8.5" cy="6" r="2" fill="#e6e6e6"/></svg>
<svg class="a" style="left:576px;top:5px" width="17" height="15" viewBox="0 0 17 15"><rect x="1" y="1" width="15" height="10.4" rx="2" fill="#1e1e1e" stroke="#ababab" stroke-width="2"/><rect x="3.2" y="3.4" width="10.6" height="5.6" fill="#e6e6e6"/><path d="M8.5 12V14.6M4.2 14.9H12.8" stroke="#e6e6e6" stroke-width="1.4"/></svg>
<svg class="a" style="left:601px;top:5px" width="17" height="16" viewBox="0 0 17 16"><path d="M0 4H4.5Q5 0.8 8 0.8H10Q13 0.8 13.5 4H17V15H0Z" fill="#555555"/><circle cx="9" cy="8.6" r="3.8" fill="#3c3c3c" stroke="#444" stroke-width="0.5"/><circle cx="9" cy="8.6" r="2.6" fill="#555555"/><circle cx="9" cy="8.6" r="1.6" fill="#3a3a3a"/></svg>
</div>
<div class="row" style="top:848px;background:#2b2b2b">
<svg class="a" style="left:133px;top:6px" width="9" height="14" viewBox="0 0 9 14"><path d="M2 1.9L7 6.9L2 11.9" stroke="#d0d0d0" stroke-width="1.4" fill="none"/></svg>
<svg class="a" style="left:150px;top:0px" width="24" height="24" viewBox="0 0 24 24"><path d="M3.6 4.9H20.6L12.1 21.6Z M7.6 7.8L12 15.4L16.4 7.8Z" fill="#c2834d" fill-rule="evenodd" stroke="#c2834d" stroke-width="0.8" stroke-linejoin="round"/></svg>
<div class="nm" style="color:#dcdcdc">test003.PKR.leg1<span class="h">-</span>fk.L.000</div>
<svg class="a" style="left:387.3488124999999px;top:2.9px" width="18" height="18" viewBox="0 0 18 18"><circle cx="9" cy="9" r="8.6" fill="#c0606a"/><path d="M9 2.2 V9.6 Q13 9.8 15.6 7.5 A6.9 6.9 0 0 0 9 2.2Z" fill="#262626"/><path d="M9 15.8 V9.6 Q5 9.2 2.6 10.8 A6.9 6.9 0 0 0 9 15.8Z" fill="#262626"/><circle cx="9" cy="9" r="8.6" fill="none" stroke="#1e1e1e" stroke-width="0.6"/></svg>
<svg class="a" style="left:412.1488124999999px;top:2px" width="19" height="19" viewBox="0 0 19 19"><g fill="none" stroke="#1fc797" stroke-width="1.4"><path d="M5.2 3.6H13.6M4.2 5.6L8.3 14.2M14.8 5.6L10.7 14.2"/><rect x="0.9" y="1.5" width="4.2" height="4.2" rx="0.9"/><rect x="13.7" y="1.5" width="4.2" height="4.2" rx="0.9"/><rect x="7.2" y="14.2" width="4.2" height="4.2" rx="0.9"/></g></svg>
<svg class="a" style="left:551px;top:7.5px" width="17" height="12" viewBox="0 0 17 12"><path d="M0.3 6 Q8.5 -3.2 16.7 6 Q8.5 15.2 0.3 6Z" fill="#e6e6e6"/><circle cx="8.5" cy="6" r="4.2" fill="#282828"/><circle cx="8.5" cy="6" r="2" fill="#e6e6e6"/></svg>
<svg class="a" style="left:576px;top:5px" width="17" height="15" viewBox="0 0 17 15"><rect x="1" y="1" width="15" height="10.4" rx="2" fill="#1e1e1e" stroke="#ababab" stroke-width="2"/><rect x="3.2" y="3.4" width="10.6" height="5.6" fill="#e6e6e6"/><path d="M8.5 12V14.6M4.2 14.9H12.8" stroke="#e6e6e6" stroke-width="1.4"/></svg>
<svg class="a" style="left:601px;top:5px" width="17" height="16" viewBox="0 0 17 16"><path d="M0 4H4.5Q5 0.8 8 0.8H10Q13 0.8 13.5 4H17V15H0Z" fill="#555555"/><circle cx="9" cy="8.6" r="3.8" fill="#3c3c3c" stroke="#444" stroke-width="0.5"/><circle cx="9" cy="8.6" r="2.6" fill="#555555"/><circle cx="9" cy="8.6" r="1.6" fill="#3a3a3a"/></svg>
</div>
<div class="row" style="top:873px;background:#272727">
<svg class="a" style="left:133px;top:6px" width="9" height="14" viewBox="0 0 9 14"><path d="M2 1.9L7 6.9L2 11.9" stroke="#d0d0d0" stroke-width="1.4" fill="none"/></svg>
<svg class="a" style="left:150px;top:0px" width="24" height="24" viewBox="0 0 24 24"><path d="M3.6 4.9H20.6L12.1 21.6Z M7.6 7.8L12 15.4L16.4 7.8Z" fill="#c2834d" fill-rule="evenodd" stroke="#c2834d" stroke-width="0.8" stroke-linejoin="round"/></svg>
<div class="nm" style="color:#dcdcdc">test003.PKR.leg1<span class="h">-</span>fk.R.000</div>
<svg class="a" style="left:389.89004687500005px;top:2.9px" width="18" height="18" viewBox="0 0 18 18"><circle cx="9" cy="9" r="8.6" fill="#c0606a"/><path d="M9 2.2 V9.6 Q13 9.8 15.6 7.5 A6.9 6.9 0 0 0 9 2.2Z" fill="#262626"/><path d="M9 15.8 V9.6 Q5 9.2 2.6 10.8 A6.9 6.9 0 0 0 9 15.8Z" fill="#262626"/><circle cx="9" cy="9" r="8.6" fill="none" stroke="#1e1e1e" stroke-width="0.6"/></svg>
<svg class="a" style="left:414.69004687500006px;top:2px" width="19" height="19" viewBox="0 0 19 19"><g fill="none" stroke="#1fc797" stroke-width="1.4"><path d="M5.2 3.6H13.6M4.2 5.6L8.3 14.2M14.8 5.6L10.7 14.2"/><rect x="0.9" y="1.5" width="4.2" height="4.2" rx="0.9"/><rect x="13.7" y="1.5" width="4.2" height="4.2" rx="0.9"/><rect x="7.2" y="14.2" width="4.2" height="4.2" rx="0.9"/></g></svg>
<svg class="a" style="left:551px;top:7.5px" width="17" height="12" viewBox="0 0 17 12"><path d="M0.3 6 Q8.5 -3.2 16.7 6 Q8.5 15.2 0.3 6Z" fill="#e6e6e6"/><circle cx="8.5" cy="6" r="4.2" fill="#282828"/><circle cx="8.5" cy="6" r="2" fill="#e6e6e6"/></svg>
<svg class="a" style="left:576px;top:5px" width="17" height="15" viewBox="0 0 17 15"><rect x="1" y="1" width="15" height="10.4" rx="2" fill="#1e1e1e" stroke="#ababab" stroke-width="2"/><rect x="3.2" y="3.4" width="10.6" height="5.6" fill="#e6e6e6"/><path d="M8.5 12V14.6M4.2 14.9H12.8" stroke="#e6e6e6" stroke-width="1.4"/></svg>
<svg class="a" style="left:601px;top:5px" width="17" height="16" viewBox="0 0 17 16"><path d="M0 4H4.5Q5 0.8 8 0.8H10Q13 0.8 13.5 4H17V15H0Z" fill="#555555"/><circle cx="9" cy="8.6" r="3.8" fill="#3c3c3c" stroke="#444" stroke-width="0.5"/><circle cx="9" cy="8.6" r="2.6" fill="#555555"/><circle cx="9" cy="8.6" r="1.6" fill="#3a3a3a"/></svg>
</div>
<div class="row" style="top:898px;background:#2b2b2b">
<svg class="a" style="left:133px;top:6px" width="9" height="14" viewBox="0 0 9 14"><path d="M2 1.9L7 6.9L2 11.9" stroke="#d0d0d0" stroke-width="1.4" fill="none"/></svg>
<svg class="a" style="left:150px;top:0px" width="24" height="24" viewBox="0 0 24 24"><path d="M3.6 4.9H20.6L12.1 21.6Z M7.6 7.8L12 15.4L16.4 7.8Z" fill="#c2834d" fill-rule="evenodd" stroke="#c2834d" stroke-width="0.8" stroke-linejoin="round"/></svg>
<div class="nm" style="color:#dcdcdc">test003.PKR.leg2<span class="h">-</span>fk.L.000</div>
<svg class="a" style="left:387.3488124999999px;top:2.9px" width="18" height="18" viewBox="0 0 18 18"><circle cx="9" cy="9" r="8.6" fill="#c0606a"/><path d="M9 2.2 V9.6 Q13 9.8 15.6 7.5 A6.9 6.9 0 0 0 9 2.2Z" fill="#262626"/><path d="M9 15.8 V9.6 Q5 9.2 2.6 10.8 A6.9 6.9 0 0 0 9 15.8Z" fill="#262626"/><circle cx="9" cy="9" r="8.6" fill="none" stroke="#1e1e1e" stroke-width="0.6"/></svg>
<svg class="a" style="left:412.1488124999999px;top:2px" width="19" height="19" viewBox="0 0 19 19"><g fill="none" stroke="#1fc797" stroke-width="1.4"><path d="M5.2 3.6H13.6M4.2 5.6L8.3 14.2M14.8 5.6L10.7 14.2"/><rect x="0.9" y="1.5" width="4.2" height="4.2" rx="0.9"/><rect x="13.7" y="1.5" width="4.2" height="4.2" rx="0.9"/><rect x="7.2" y="14.2" width="4.2" height="4.2" rx="0.9"/></g></svg>
<svg class="a" style="left:551px;top:7.5px" width="17" height="12" viewBox="0 0 17 12"><path d="M0.3 6 Q8.5 -3.2 16.7 6 Q8.5 15.2 0.3 6Z" fill="#e6e6e6"/><circle cx="8.5" cy="6" r="4.2" fill="#282828"/><circle cx="8.5" cy="6" r="2" fill="#e6e6e6"/></svg>
<svg class="a" style="left:576px;top:5px" width="17" height="15" viewBox="0 0 17 15"><rect x="1" y="1" width="15" height="10.4" rx="2" fill="#1e1e1e" stroke="#ababab" stroke-width="2"/><rect x="3.2" y="3.4" width="10.6" height="5.6" fill="#e6e6e6"/><path d="M8.5 12V14.6M4.2 14.9H12.8" stroke="#e6e6e6" stroke-width="1.4"/></svg>
<svg class="a" style="left:601px;top:5px" width="17" height="16" viewBox="0 0 17 16"><path d="M0 4H4.5Q5 0.8 8 0.8H10Q13 0.8 13.5 4H17V15H0Z" fill="#555555"/><circle cx="9" cy="8.6" r="3.8" fill="#3c3c3c" stroke="#444" stroke-width="0.5"/><circle cx="9" cy="8.6" r="2.6" fill="#555555"/><circle cx="9" cy="8.6" r="1.6" fill="#3a3a3a"/></svg>
</div>
<div class="a" style="left:1257px;top:0px;width:1.2000000000000455px;height:905px;background:#636363;border-radius:0;"></div>
<div class="a" style="left:1282px;top:0px;width:1.2000000000000455px;height:905px;background:#636363;border-radius:0;"></div>
<div class="a" style="left:1307px;top:0px;width:1.2000000000000455px;height:905px;background:#636363;border-radius:0;"></div>
<div class="a" style="left:1332px;top:0;width:1.2px;height:905px;background:repeating-linear-gradient(#636363 0 4px,transparent 4px 9px,#636363 9px 10px)"></div>
<div class="a" style="left:1231px;top:902px;width:614px;height:3px;background:rgba(110,110,110,0.35);border-radius:2px;"></div>
</body></html>
